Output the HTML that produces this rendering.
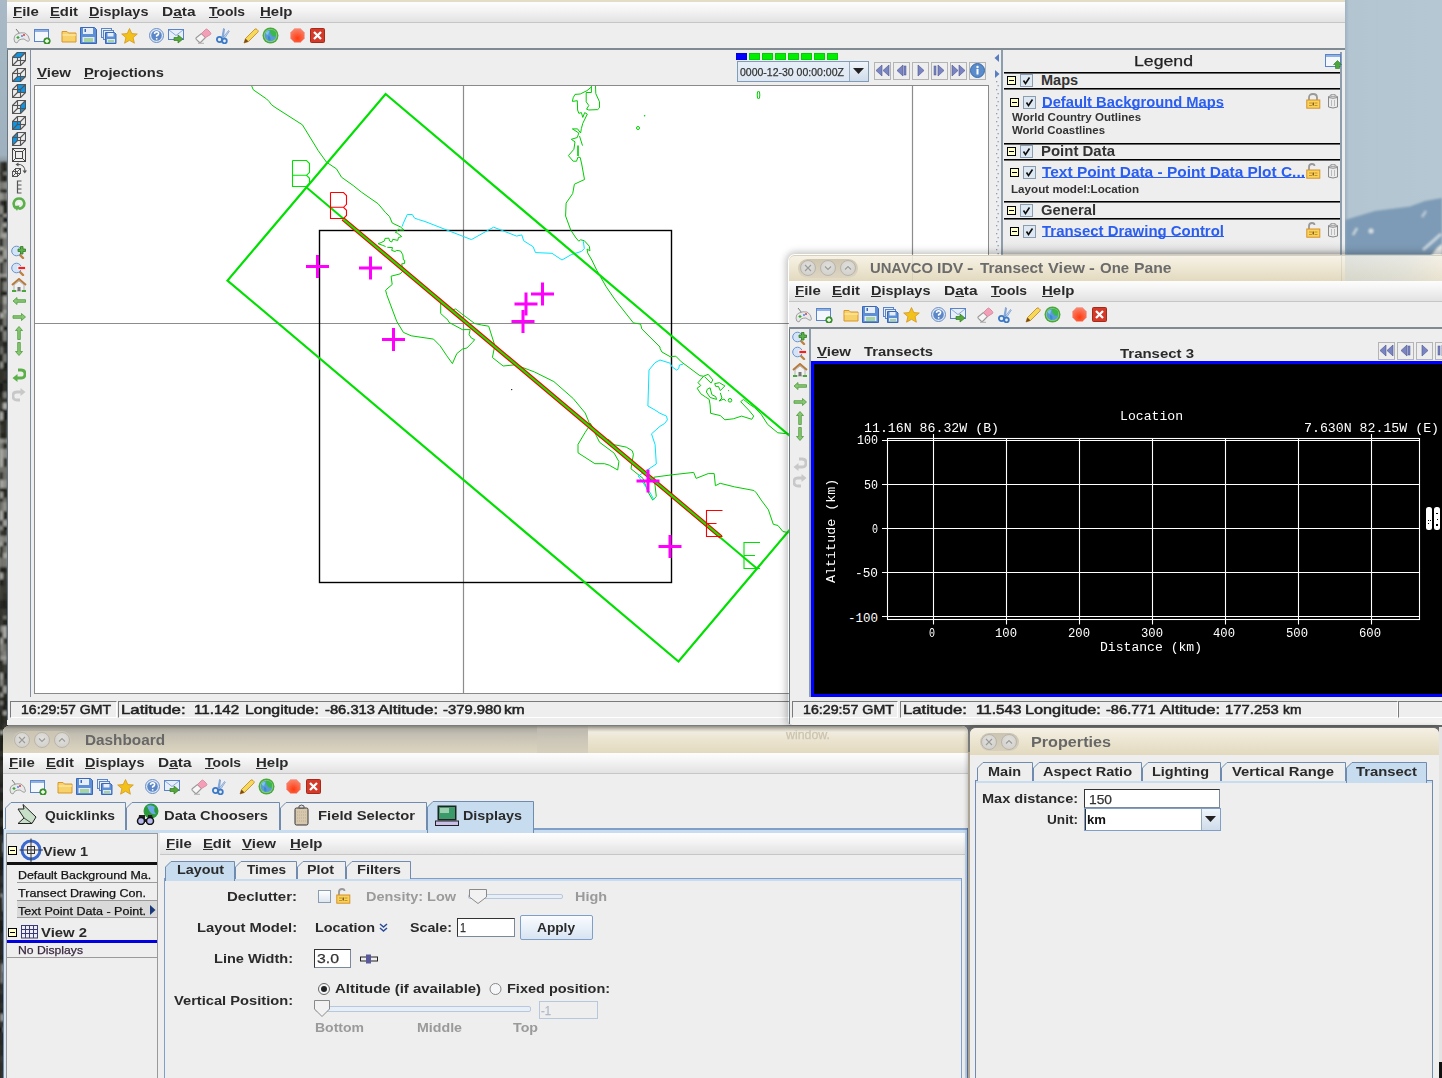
<!DOCTYPE html><html><head><meta charset="utf-8"><style>
html,body{margin:0;padding:0;width:1442px;height:1078px;overflow:hidden;background:#7a7b7b;}
div,svg{position:absolute;box-sizing:border-box;}
.t{white-space:pre;}
u{text-decoration:none;border-bottom:1px solid currentColor;}
</style></head><body>
<div style="left:0px;top:0px;width:8px;height:1078px;background:linear-gradient(#a9bac6 0,#9fb1be 155px,#6a6f70 170px,#9a9c9c 195px,#4a4d4e 225px,#a4a6a6 270px,#3a3c3d 320px,#2a2c2d 390px,#8a8c8c 440px,#4a4c4d 500px,#9a9c9c 550px,#2a2c2d 610px,#3a3c3d 700px,#1a1c1d 800px,#2a2c2d 1078px);"></div>
<svg style="left:0;top:0" width="7" height="1078"><defs><filter id="rk"><feGaussianBlur stdDeviation="1"/></filter></defs><g filter="url(#rk)"><rect x="0" y="162" width="4" height="6" fill="#363630"/><rect x="3" y="162" width="4" height="6" fill="#25251f"/><rect x="0" y="168" width="4" height="4" fill="#373731"/><rect x="3" y="168" width="4" height="4" fill="#24241e"/><rect x="0" y="172" width="4" height="3" fill="#22221c"/><rect x="3" y="172" width="4" height="3" fill="#73736d"/><rect x="0" y="175" width="4" height="7" fill="#35352f"/><rect x="3" y="175" width="4" height="7" fill="#23231d"/><rect x="0" y="182" width="4" height="7" fill="#767670"/><rect x="3" y="182" width="4" height="7" fill="#868680"/><rect x="0" y="189" width="4" height="4" fill="#363630"/><rect x="3" y="189" width="4" height="4" fill="#25251f"/><rect x="0" y="193" width="4" height="7" fill="#93938d"/><rect x="3" y="193" width="4" height="7" fill="#787872"/><rect x="0" y="200" width="4" height="6" fill="#33332d"/><rect x="3" y="200" width="4" height="6" fill="#1e1e18"/><rect x="0" y="206" width="4" height="8" fill="#8b8b85"/><rect x="3" y="206" width="4" height="8" fill="#1a1a14"/><rect x="0" y="214" width="4" height="3" fill="#1f1f19"/><rect x="3" y="214" width="4" height="3" fill="#93938d"/><rect x="0" y="217" width="4" height="6" fill="#70706a"/><rect x="3" y="217" width="4" height="6" fill="#191913"/><rect x="0" y="223" width="4" height="4" fill="#74746e"/><rect x="3" y="223" width="4" height="4" fill="#a0a09a"/><rect x="0" y="227" width="4" height="6" fill="#878781"/><rect x="3" y="227" width="4" height="6" fill="#2a2a24"/><rect x="0" y="233" width="4" height="5" fill="#989892"/><rect x="3" y="233" width="4" height="5" fill="#a2a29c"/><rect x="0" y="238" width="4" height="9" fill="#21211b"/><rect x="3" y="238" width="4" height="9" fill="#7a7a74"/><rect x="0" y="247" width="4" height="3" fill="#acaca6"/><rect x="3" y="247" width="4" height="3" fill="#868680"/><rect x="0" y="250" width="4" height="6" fill="#21211b"/><rect x="3" y="250" width="4" height="6" fill="#9f9f99"/><rect x="0" y="256" width="4" height="3" fill="#898983"/><rect x="3" y="256" width="4" height="3" fill="#94948e"/><rect x="0" y="259" width="4" height="3" fill="#a0a09a"/><rect x="3" y="259" width="4" height="3" fill="#1f1f19"/><rect x="0" y="262" width="4" height="3" fill="#262620"/><rect x="3" y="262" width="4" height="3" fill="#6f6f69"/><rect x="0" y="265" width="4" height="9" fill="#2b2b25"/><rect x="3" y="265" width="4" height="9" fill="#777771"/><rect x="0" y="274" width="4" height="3" fill="#8d8d87"/><rect x="3" y="274" width="4" height="3" fill="#9d9d97"/><rect x="0" y="277" width="4" height="5" fill="#21211b"/><rect x="3" y="277" width="4" height="5" fill="#373731"/><rect x="0" y="282" width="4" height="9" fill="#31312b"/><rect x="3" y="282" width="4" height="9" fill="#81817b"/><rect x="0" y="291" width="4" height="5" fill="#282822"/><rect x="3" y="291" width="4" height="5" fill="#23231d"/><rect x="0" y="296" width="4" height="8" fill="#3c3c36"/><rect x="3" y="296" width="4" height="8" fill="#9f9f99"/><rect x="0" y="304" width="4" height="6" fill="#33332d"/><rect x="3" y="304" width="4" height="6" fill="#7b7b75"/><rect x="0" y="310" width="4" height="3" fill="#292923"/><rect x="3" y="310" width="4" height="3" fill="#a0a09a"/><rect x="0" y="313" width="4" height="5" fill="#acaca6"/><rect x="3" y="313" width="4" height="5" fill="#84847e"/><rect x="0" y="318" width="4" height="8" fill="#21211b"/><rect x="3" y="318" width="4" height="8" fill="#777771"/><rect x="0" y="326" width="4" height="5" fill="#888882"/><rect x="3" y="326" width="4" height="5" fill="#1d1d17"/><rect x="0" y="331" width="4" height="5" fill="#282822"/><rect x="3" y="331" width="4" height="5" fill="#84847e"/><rect x="0" y="336" width="4" height="5" fill="#21211b"/><rect x="3" y="336" width="4" height="5" fill="#7f7f79"/><rect x="0" y="341" width="4" height="6" fill="#3a3a34"/><rect x="3" y="341" width="4" height="6" fill="#21211b"/><rect x="0" y="347" width="4" height="7" fill="#70706a"/><rect x="3" y="347" width="4" height="7" fill="#2f2f29"/><rect x="0" y="354" width="4" height="8" fill="#1b1b15"/><rect x="3" y="354" width="4" height="8" fill="#777771"/><rect x="0" y="362" width="4" height="6" fill="#95958f"/><rect x="3" y="362" width="4" height="6" fill="#1d1d17"/><rect x="0" y="368" width="4" height="3" fill="#30302a"/><rect x="3" y="368" width="4" height="3" fill="#21211b"/><rect x="0" y="371" width="4" height="9" fill="#2e2e28"/><rect x="3" y="371" width="4" height="9" fill="#373731"/><rect x="0" y="380" width="4" height="3" fill="#33332d"/><rect x="3" y="380" width="4" height="3" fill="#1a1a14"/><rect x="0" y="383" width="4" height="9" fill="#191913"/><rect x="3" y="383" width="4" height="9" fill="#31312b"/><rect x="0" y="392" width="4" height="6" fill="#1d1d17"/><rect x="3" y="392" width="4" height="6" fill="#7c7c76"/><rect x="0" y="398" width="4" height="5" fill="#2e2e28"/><rect x="3" y="398" width="4" height="5" fill="#363630"/><rect x="0" y="403" width="4" height="6" fill="#3b3b35"/><rect x="3" y="403" width="4" height="6" fill="#afafa9"/><rect x="0" y="409" width="4" height="3" fill="#1e1e18"/><rect x="3" y="409" width="4" height="3" fill="#272721"/><rect x="0" y="412" width="4" height="8" fill="#acaca6"/><rect x="3" y="412" width="4" height="8" fill="#191913"/><rect x="0" y="420" width="4" height="5" fill="#25251f"/><rect x="3" y="420" width="4" height="5" fill="#2e2e28"/><rect x="0" y="425" width="4" height="8" fill="#383832"/><rect x="3" y="425" width="4" height="8" fill="#2d2d27"/><rect x="0" y="433" width="4" height="6" fill="#25251f"/><rect x="3" y="433" width="4" height="6" fill="#25251f"/><rect x="0" y="439" width="4" height="4" fill="#969690"/><rect x="3" y="439" width="4" height="4" fill="#7f7f79"/><rect x="0" y="443" width="4" height="6" fill="#73736d"/><rect x="3" y="443" width="4" height="6" fill="#2a2a24"/><rect x="0" y="449" width="4" height="9" fill="#a7a7a1"/><rect x="3" y="449" width="4" height="9" fill="#898983"/><rect x="0" y="458" width="4" height="9" fill="#adada7"/><rect x="3" y="458" width="4" height="9" fill="#35352f"/><rect x="0" y="467" width="4" height="5" fill="#72726c"/><rect x="3" y="467" width="4" height="5" fill="#73736d"/><rect x="0" y="472" width="4" height="8" fill="#2f2f29"/><rect x="3" y="472" width="4" height="8" fill="#70706a"/><rect x="0" y="480" width="4" height="8" fill="#a8a8a2"/><rect x="3" y="480" width="4" height="8" fill="#90908a"/><rect x="0" y="488" width="4" height="4" fill="#1c1c16"/><rect x="3" y="488" width="4" height="4" fill="#20201a"/><rect x="0" y="492" width="4" height="6" fill="#9d9d97"/><rect x="3" y="492" width="4" height="6" fill="#25251f"/><rect x="0" y="498" width="4" height="4" fill="#292923"/><rect x="3" y="498" width="4" height="4" fill="#6f6f69"/><rect x="0" y="502" width="4" height="9" fill="#72726c"/><rect x="3" y="502" width="4" height="9" fill="#90908a"/><rect x="0" y="511" width="4" height="9" fill="#aeaea8"/><rect x="3" y="511" width="4" height="9" fill="#23231d"/><rect x="0" y="520" width="4" height="6" fill="#272721"/><rect x="3" y="520" width="4" height="6" fill="#9f9f99"/><rect x="0" y="526" width="4" height="4" fill="#878781"/><rect x="3" y="526" width="4" height="4" fill="#191913"/><rect x="0" y="530" width="4" height="6" fill="#393933"/><rect x="3" y="530" width="4" height="6" fill="#2e2e28"/><rect x="0" y="536" width="4" height="6" fill="#888882"/><rect x="3" y="536" width="4" height="6" fill="#7d7d77"/><rect x="0" y="542" width="4" height="4" fill="#9f9f99"/><rect x="3" y="542" width="4" height="4" fill="#2c2c26"/><rect x="0" y="546" width="4" height="7" fill="#2d2d27"/><rect x="3" y="546" width="4" height="7" fill="#70706a"/><rect x="0" y="553" width="4" height="5" fill="#1b1b15"/><rect x="3" y="553" width="4" height="5" fill="#a3a39d"/><rect x="0" y="558" width="4" height="9" fill="#71716b"/><rect x="3" y="558" width="4" height="9" fill="#767670"/><rect x="0" y="567" width="4" height="6" fill="#24241e"/><rect x="3" y="567" width="4" height="6" fill="#21211b"/><rect x="0" y="573" width="4" height="6" fill="#a6a6a0"/><rect x="3" y="573" width="4" height="6" fill="#383832"/><rect x="0" y="579" width="4" height="7" fill="#1e1e18"/><rect x="3" y="579" width="4" height="7" fill="#35352f"/><rect x="0" y="586" width="4" height="7" fill="#3c3c36"/><rect x="3" y="586" width="4" height="7" fill="#3a3a34"/><rect x="0" y="593" width="4" height="7" fill="#3c3c36"/><rect x="3" y="593" width="4" height="7" fill="#31312b"/><rect x="0" y="600" width="4" height="9" fill="#262620"/><rect x="3" y="600" width="4" height="9" fill="#22221c"/><rect x="0" y="609" width="4" height="7" fill="#383832"/><rect x="3" y="609" width="4" height="7" fill="#3b3b35"/><rect x="0" y="616" width="4" height="3" fill="#31312b"/><rect x="3" y="616" width="4" height="3" fill="#73736d"/><rect x="0" y="619" width="4" height="7" fill="#3b3b35"/><rect x="3" y="619" width="4" height="7" fill="#20201a"/><rect x="0" y="626" width="4" height="6" fill="#83837d"/><rect x="3" y="626" width="4" height="6" fill="#a8a8a2"/><rect x="0" y="632" width="4" height="6" fill="#32322c"/><rect x="3" y="632" width="4" height="6" fill="#aaaaa4"/><rect x="0" y="638" width="4" height="6" fill="#a5a59f"/><rect x="3" y="638" width="4" height="6" fill="#373731"/><rect x="0" y="644" width="4" height="7" fill="#868680"/><rect x="3" y="644" width="4" height="7" fill="#71716b"/><rect x="0" y="651" width="4" height="5" fill="#70706a"/><rect x="3" y="651" width="4" height="5" fill="#81817b"/><rect x="0" y="656" width="4" height="4" fill="#92928c"/><rect x="3" y="656" width="4" height="4" fill="#9b9b95"/><rect x="0" y="660" width="4" height="4" fill="#1f1f19"/><rect x="3" y="660" width="4" height="4" fill="#7d7d77"/><rect x="0" y="664" width="4" height="9" fill="#292923"/><rect x="3" y="664" width="4" height="9" fill="#3a3a34"/><rect x="0" y="673" width="4" height="6" fill="#a2a29c"/><rect x="3" y="673" width="4" height="6" fill="#23231d"/><rect x="0" y="679" width="4" height="7" fill="#898983"/><rect x="3" y="679" width="4" height="7" fill="#3b3b35"/><rect x="0" y="686" width="4" height="7" fill="#21211b"/><rect x="3" y="686" width="4" height="7" fill="#9a9a94"/><rect x="0" y="693" width="4" height="4" fill="#969690"/><rect x="3" y="693" width="4" height="4" fill="#25251f"/><rect x="0" y="697" width="4" height="4" fill="#25251f"/><rect x="3" y="697" width="4" height="4" fill="#21211b"/><rect x="0" y="701" width="4" height="4" fill="#797973"/><rect x="3" y="701" width="4" height="4" fill="#1f1f19"/><rect x="0" y="705" width="4" height="6" fill="#33332d"/><rect x="3" y="705" width="4" height="6" fill="#21211b"/><rect x="0" y="711" width="4" height="4" fill="#1a1a14"/><rect x="3" y="711" width="4" height="4" fill="#9b9b95"/><rect x="0" y="715" width="4" height="9" fill="#20201a"/><rect x="3" y="715" width="4" height="9" fill="#2e2e28"/><rect x="0" y="724" width="4" height="7" fill="#25251f"/><rect x="3" y="724" width="4" height="7" fill="#373731"/><rect x="0" y="731" width="4" height="3" fill="#afafa9"/><rect x="3" y="731" width="4" height="3" fill="#373731"/><rect x="0" y="734" width="4" height="4" fill="#20201a"/><rect x="3" y="734" width="4" height="4" fill="#23231d"/><rect x="0" y="738" width="4" height="5" fill="#1f1f19"/><rect x="3" y="738" width="4" height="5" fill="#21211b"/><rect x="0" y="743" width="4" height="8" fill="#1f1f19"/><rect x="3" y="743" width="4" height="8" fill="#363630"/><rect x="0" y="751" width="4" height="6" fill="#34342e"/><rect x="3" y="751" width="4" height="6" fill="#30302a"/><rect x="0" y="757" width="4" height="3" fill="#1b1b15"/><rect x="3" y="757" width="4" height="3" fill="#24241e"/><rect x="0" y="760" width="4" height="6" fill="#30302a"/><rect x="3" y="760" width="4" height="6" fill="#25251f"/><rect x="0" y="766" width="4" height="7" fill="#393933"/><rect x="3" y="766" width="4" height="7" fill="#2d2d27"/><rect x="0" y="773" width="4" height="3" fill="#32322c"/><rect x="3" y="773" width="4" height="3" fill="#25251f"/><rect x="0" y="776" width="4" height="7" fill="#2e2e28"/><rect x="3" y="776" width="4" height="7" fill="#292923"/><rect x="0" y="783" width="4" height="5" fill="#23231d"/><rect x="3" y="783" width="4" height="5" fill="#32322c"/><rect x="0" y="788" width="4" height="4" fill="#3b3b35"/><rect x="3" y="788" width="4" height="4" fill="#34342e"/><rect x="0" y="792" width="4" height="9" fill="#262620"/><rect x="3" y="792" width="4" height="9" fill="#1d1d17"/><rect x="0" y="801" width="4" height="9" fill="#373731"/><rect x="3" y="801" width="4" height="9" fill="#2f2f29"/><rect x="0" y="810" width="4" height="8" fill="#1c1c16"/><rect x="3" y="810" width="4" height="8" fill="#2c2c26"/><rect x="0" y="818" width="4" height="5" fill="#32322c"/><rect x="3" y="818" width="4" height="5" fill="#3b3b35"/><rect x="0" y="823" width="4" height="3" fill="#383832"/><rect x="3" y="823" width="4" height="3" fill="#20201a"/><rect x="0" y="826" width="4" height="9" fill="#1a1a14"/><rect x="3" y="826" width="4" height="9" fill="#1f1f19"/><rect x="0" y="835" width="4" height="8" fill="#35352f"/><rect x="3" y="835" width="4" height="8" fill="#1c1c16"/><rect x="0" y="843" width="4" height="9" fill="#31312b"/><rect x="3" y="843" width="4" height="9" fill="#8f8f89"/><rect x="0" y="852" width="4" height="5" fill="#2e2e28"/><rect x="3" y="852" width="4" height="5" fill="#393933"/><rect x="0" y="857" width="4" height="6" fill="#1f1f19"/><rect x="3" y="857" width="4" height="6" fill="#1d1d17"/><rect x="0" y="863" width="4" height="7" fill="#1b1b15"/><rect x="3" y="863" width="4" height="7" fill="#23231d"/><rect x="0" y="870" width="4" height="6" fill="#23231d"/><rect x="3" y="870" width="4" height="6" fill="#3b3b35"/><rect x="0" y="876" width="4" height="7" fill="#34342e"/><rect x="3" y="876" width="4" height="7" fill="#33332d"/><rect x="0" y="883" width="4" height="5" fill="#2c2c26"/><rect x="3" y="883" width="4" height="5" fill="#2b2b25"/><rect x="0" y="888" width="4" height="6" fill="#3c3c36"/><rect x="3" y="888" width="4" height="6" fill="#2b2b25"/><rect x="0" y="894" width="4" height="3" fill="#8d8d87"/><rect x="3" y="894" width="4" height="3" fill="#23231d"/><rect x="0" y="897" width="4" height="6" fill="#31312b"/><rect x="3" y="897" width="4" height="6" fill="#969690"/><rect x="0" y="903" width="4" height="8" fill="#2d2d27"/><rect x="3" y="903" width="4" height="8" fill="#8a8a84"/><rect x="0" y="911" width="4" height="6" fill="#292923"/><rect x="3" y="911" width="4" height="6" fill="#282822"/><rect x="0" y="917" width="4" height="3" fill="#363630"/><rect x="3" y="917" width="4" height="3" fill="#282822"/><rect x="0" y="920" width="4" height="7" fill="#1c1c16"/><rect x="3" y="920" width="4" height="7" fill="#363630"/><rect x="0" y="927" width="4" height="3" fill="#1c1c16"/><rect x="3" y="927" width="4" height="3" fill="#22221c"/><rect x="0" y="930" width="4" height="3" fill="#21211b"/><rect x="3" y="930" width="4" height="3" fill="#363630"/><rect x="0" y="933" width="4" height="7" fill="#33332d"/><rect x="3" y="933" width="4" height="7" fill="#3a3a34"/><rect x="0" y="940" width="4" height="9" fill="#2b2b25"/><rect x="3" y="940" width="4" height="9" fill="#282822"/><rect x="0" y="949" width="4" height="6" fill="#2c2c26"/><rect x="3" y="949" width="4" height="6" fill="#2f2f29"/><rect x="0" y="955" width="4" height="5" fill="#25251f"/><rect x="3" y="955" width="4" height="5" fill="#282822"/><rect x="0" y="960" width="4" height="4" fill="#393933"/><rect x="3" y="960" width="4" height="4" fill="#25251f"/><rect x="0" y="964" width="4" height="8" fill="#75756f"/><rect x="3" y="964" width="4" height="8" fill="#8f8f89"/><rect x="0" y="972" width="4" height="6" fill="#72726c"/><rect x="3" y="972" width="4" height="6" fill="#3b3b35"/><rect x="0" y="978" width="4" height="5" fill="#797973"/><rect x="3" y="978" width="4" height="5" fill="#23231d"/><rect x="0" y="983" width="4" height="7" fill="#30302a"/><rect x="3" y="983" width="4" height="7" fill="#2f2f29"/><rect x="0" y="990" width="4" height="4" fill="#383832"/><rect x="3" y="990" width="4" height="4" fill="#1d1d17"/><rect x="0" y="994" width="4" height="9" fill="#262620"/><rect x="3" y="994" width="4" height="9" fill="#292923"/><rect x="0" y="1003" width="4" height="6" fill="#30302a"/><rect x="3" y="1003" width="4" height="6" fill="#2d2d27"/><rect x="0" y="1009" width="4" height="5" fill="#24241e"/><rect x="3" y="1009" width="4" height="5" fill="#30302a"/><rect x="0" y="1014" width="4" height="7" fill="#979791"/><rect x="3" y="1014" width="4" height="7" fill="#787872"/><rect x="0" y="1021" width="4" height="6" fill="#383832"/><rect x="3" y="1021" width="4" height="6" fill="#363630"/><rect x="0" y="1027" width="4" height="5" fill="#191913"/><rect x="3" y="1027" width="4" height="5" fill="#898983"/><rect x="0" y="1032" width="4" height="8" fill="#2c2c26"/><rect x="3" y="1032" width="4" height="8" fill="#2d2d27"/><rect x="0" y="1040" width="4" height="5" fill="#272721"/><rect x="3" y="1040" width="4" height="5" fill="#2d2d27"/><rect x="0" y="1045" width="4" height="5" fill="#2d2d27"/><rect x="3" y="1045" width="4" height="5" fill="#2a2a24"/><rect x="0" y="1050" width="4" height="6" fill="#2c2c26"/><rect x="3" y="1050" width="4" height="6" fill="#272721"/><rect x="0" y="1056" width="4" height="6" fill="#3a3a34"/><rect x="3" y="1056" width="4" height="6" fill="#30302a"/><rect x="0" y="1062" width="4" height="9" fill="#30302a"/><rect x="3" y="1062" width="4" height="9" fill="#31312b"/><rect x="0" y="1071" width="4" height="9" fill="#30302a"/><rect x="3" y="1071" width="4" height="9" fill="#3b3b35"/></g></svg>
<div style="left:1345px;top:0px;width:97px;height:256px;background:linear-gradient(90deg,#9fb2bf 0,#b3c5d1 4px,#b5c7d2);"></div>
<svg style="left:1345px;top:190px" width="97" height="66"><defs><filter id="bl"><feGaussianBlur stdDeviation="0.8"/></filter></defs><g filter="url(#bl)"><path d="M0 30 L15 25.5 L30 21 L65 16.5 L80 11 L97 8 V66 H0Z" fill="#7d9bb6"/><path d="M8 45 L12 38" stroke="#c8d4dc" stroke-width="2.5"/><circle cx="26" cy="41" r="2.5" fill="#d4dde4"/><path d="M77 27 L81 21" stroke="#b8c8d4" stroke-width="2.5"/><path d="M78 60 L96 44" stroke="#c8d6e0" stroke-width="3"/><path d="M86 66 L92 58 L97 54 V66Z" fill="#e8ecea"/></g></svg>
<div style="left:7px;top:0px;width:1338px;height:3px;background:#e3dcc6;"></div>
<div style="left:7px;top:2px;width:1338px;height:20px;background:linear-gradient(#fdfdfd,#f4f4f4 40%,#e2e2e2);"></div>
<div style="left:7px;top:22px;width:1338px;height:1px;background:#c6c6c6;"></div>
<div style="left:13.0px;top:17px;width:9.1px;height:1px;background:#2a2a2a"></div>
<div class="t" style="left:13px;top:6px;font-size:12.6px;line-height:12.6px;font-weight:bold;color:#2a2a2a;font-family:'Liberation Sans',sans-serif;transform:scaleX(1.1888);transform-origin:0 0;">File</div>
<div style="left:50.0px;top:17px;width:9.9px;height:1px;background:#2a2a2a"></div>
<div class="t" style="left:50px;top:6px;font-size:12.6px;line-height:12.6px;font-weight:bold;color:#2a2a2a;font-family:'Liberation Sans',sans-serif;transform:scaleX(1.1754);transform-origin:0 0;">Edit</div>
<div style="left:89.0px;top:17px;width:10.4px;height:1px;background:#2a2a2a"></div>
<div class="t" style="left:89px;top:6px;font-size:12.6px;line-height:12.6px;font-weight:bold;color:#2a2a2a;font-family:'Liberation Sans',sans-serif;transform:scaleX(1.1473);transform-origin:0 0;">Displays</div>
<div style="left:173.2px;top:17px;width:8.6px;height:1px;background:#2a2a2a"></div>
<div class="t" style="left:162px;top:6px;font-size:12.6px;line-height:12.6px;font-weight:bold;color:#2a2a2a;font-family:'Liberation Sans',sans-serif;transform:scaleX(1.2268);transform-origin:0 0;">Data</div>
<div style="left:209.0px;top:17px;width:8.5px;height:1px;background:#2a2a2a"></div>
<div class="t" style="left:209px;top:6px;font-size:12.6px;line-height:12.6px;font-weight:bold;color:#2a2a2a;font-family:'Liberation Sans',sans-serif;transform:scaleX(1.1049);transform-origin:0 0;">Tools</div>
<div style="left:260.0px;top:17px;width:10.8px;height:1px;background:#2a2a2a"></div>
<div class="t" style="left:260px;top:6px;font-size:12.6px;line-height:12.6px;font-weight:bold;color:#2a2a2a;font-family:'Liberation Sans',sans-serif;transform:scaleX(1.1884);transform-origin:0 0;">Help</div>
<div style="left:7px;top:23px;width:1338px;height:26px;background:#eeeeee;"></div>
<div style="left:7px;top:48px;width:1338px;height:2px;background:#7f8a93;"></div>
<svg style="left:13px;top:28px" width="17" height="16" viewBox="0 0 17 16"><path d="M3 1 L7 6" stroke="#777" stroke-width="1" fill="none"/><path d="M4 6 Q8 4 12 5 Q16 7 16.5 12 Q16 14 14 13 L11 11 Q8 11 6 12 L4 15 Q1 15 1 11 Q1 7 4 6Z" fill="#e8e8e8" stroke="#999" stroke-width="0.9"/><path d="M3.5 9.5 h3 M5 8 v3" stroke="#3a3" stroke-width="1.2"/><circle cx="9" cy="8" r="1" fill="#48f"/><circle cx="11" cy="7" r="1" fill="#e33"/></svg>
<svg style="left:34px;top:28px" width="17" height="16" viewBox="0 0 17 16"><rect x="0.5" y="1.5" width="14" height="12" fill="#f4f7fc" stroke="#5a84c8"/><rect x="1" y="2" width="13" height="2" fill="#8fb0e0"/><circle cx="13" cy="13" r="3.3" fill="#3c9a2c" stroke="#2a7a20" stroke-width="0.6"/><path d="M11 13h4M13 11v4" stroke="#fff" stroke-width="1.3"/></svg>
<svg style="left:61px;top:28px" width="16" height="16" viewBox="0 0 16 16"><path d="M1 3.5h5l1.5 1.5h7.5v9h-14z" fill="#f7d26a" stroke="#d9962a" stroke-width="1"/><path d="M1.5 7h13.5" stroke="#fbe9a8" stroke-width="1.2"/></svg>
<svg style="left:80px;top:27px" width="17" height="17" viewBox="0 0 17 17"><path d="M0.5 0.5h14l2 2v14h-16z" fill="#5d8fd6" stroke="#3a68b8"/><rect x="3" y="1" width="10" height="6" fill="#e8eef8"/><rect x="4.5" y="2" width="1.5" height="3" fill="#3a68b8"/><rect x="2.5" y="10" width="12" height="5" fill="#dfe8f4"/><path d="M4 12h9M4 14h9" stroke="#6cbf4a" stroke-width="1"/></svg>
<svg style="left:101px;top:28px" width="16" height="16" viewBox="0 0 16 16"><rect x="0.5" y="0.5" width="10" height="9" fill="#e8eef8" stroke="#5a84c8"/><rect x="2.5" y="2.5" width="10" height="9" fill="#e8eef8" stroke="#5a84c8"/><path d="M4.5 4.5h9l1.5 1.5v9.5h-10.5z" fill="#5d8fd6" stroke="#3a68b8"/><rect x="6.5" y="5" width="6" height="3.5" fill="#e8eef8"/><rect x="6" y="11" width="8" height="3.5" fill="#dfe8f4"/><path d="M7 13h6" stroke="#6cbf4a"/></svg>
<svg style="left:121px;top:28px" width="17" height="16" viewBox="0 0 17 16"><path d="M8.5 0.5 L10.8 5.6 L16.3 6 L12.1 9.6 L13.4 15.2 L8.5 12.3 L3.6 15.2 L4.9 9.6 L0.7 6 L6.2 5.6Z" fill="#f2c21b" stroke="#d6951a" stroke-width="0.8"/></svg>
<svg style="left:149px;top:28px" width="16" height="16" viewBox="0 0 16 16"><circle cx="7.5" cy="7.5" r="7" fill="#dfe8f5" stroke="#6a8fc8"/><circle cx="7.5" cy="7.5" r="5.3" fill="#5d88c8"/><path d="M5.5 5.8 Q5.7 3.8 7.6 3.8 Q9.6 3.9 9.6 5.6 Q9.5 7 7.7 7.6 V8.8" stroke="#fff" stroke-width="1.6" fill="none"/><circle cx="7.7" cy="10.8" r="0.9" fill="#fff"/></svg>
<svg style="left:168px;top:28px" width="17" height="16" viewBox="0 0 17 16"><rect x="0.5" y="1.5" width="15" height="10" fill="#e8eefa" stroke="#5a84c8"/><path d="M1 2 L8 7.5 L15 2" stroke="#8aa8dc" fill="none"/><path d="M6 9.5h4v-2.5l5 4l-5 4v-2.5h-4z" fill="#56a63a" stroke="#2f7d22" stroke-width="0.7"/></svg>
<svg style="left:195px;top:28px" width="17" height="16" viewBox="0 0 17 16"><path d="M6.5 5.5 L10.5 9.5 L6 14 Q5 15 4 14 L1.3 11.3 Q0.5 10.3 1.5 9.5Z" fill="#f6f6f6" stroke="#9a9a9a" stroke-width="1.1"/><path d="M6.5 5.5 L10.5 1.5 Q11.5 0.5 12.5 1.5 L15.5 4.5 Q16.3 5.5 15.5 6.5 L10.5 9.5Z" fill="#f2a0b8" stroke="#d8849c" stroke-width="0.9"/><path d="M3 15.3h6" stroke="#b0b0b0" stroke-width="1"/></svg>
<svg style="left:216px;top:28px" width="14" height="16" viewBox="0 0 14 16"><path d="M6 9 L7.5 0.5 L8.5 1 L7.5 9.5Z" fill="#9ab8e0" stroke="#5a88c8" stroke-width="0.6"/><path d="M7.5 9 L12.5 2.5 L13.3 3.2 L9 9.8Z" fill="#c8dcf0" stroke="#5a88c8" stroke-width="0.6"/><circle cx="3.5" cy="11.5" r="2.6" fill="none" stroke="#3a7ac8" stroke-width="1.8"/><circle cx="8.5" cy="13" r="2.3" fill="none" stroke="#3a7ac8" stroke-width="1.8"/></svg>
<svg style="left:243px;top:28px" width="16" height="16" viewBox="0 0 16 16"><path d="M1 15 L2.5 10.5 L12 1 Q13 0.5 14 1.5 L15 2.5 Q15.5 3.5 14.8 4.2 L5.5 13.5Z" fill="#f4d95a" stroke="#c88a2a" stroke-width="0.9"/><path d="M1 15 L2.5 10.5 L5.5 13.5Z" fill="#7a4a1a"/></svg>
<svg style="left:262px;top:27px" width="17" height="17" viewBox="0 0 17 17"><circle cx="8.5" cy="8.5" r="8" fill="#4aa83a"/><circle cx="8.5" cy="8.5" r="6.6" fill="#8ad07a"/><circle cx="8.5" cy="8.5" r="5.8" fill="#5a9ad8"/><path d="M8 2.8 Q12 2.5 14 5.5 Q14.5 9 12.5 10 Q10 9.5 9.5 8 Q8 7 8 2.8Z" fill="#3ab84a"/><path d="M6 9 Q8 9 8.5 11 Q9 13.5 7 14 Q5.5 12 6 9Z" fill="#3a8ad0"/><path d="M4 5 Q6 3.5 7.5 4.5 Q6 6 6.5 7.5 Q5 8 4 7Z" fill="#7ac8e8"/></svg>
<svg style="left:290px;top:28px" width="15" height="15" viewBox="0 0 15 15"><defs><radialGradient id="rcg" cx="0.5" cy="0.7" r="0.7"><stop offset="0" stop-color="#ff3a10"/><stop offset="1" stop-color="#f88870"/></radialGradient></defs><path d="M4.5 0.5h6l4 4v6l-4 4h-6l-4-4v-6z" fill="url(#rcg)" stroke="#f0a8a0" stroke-width="0.9"/></svg>
<svg style="left:310px;top:28px" width="15" height="15" viewBox="0 0 15 15"><rect x="0.5" y="0.5" width="14" height="14" rx="1" fill="#d43a2a" stroke="#a42a1a"/><path d="M4 4 L11 11 M11 4 L4 11" stroke="#fff" stroke-width="2.3"/></svg>
<div style="left:7px;top:50px;width:1338px;height:675px;background:#eeeeee;"></div>
<div style="left:7px;top:50px;width:1px;height:670px;background:#6a7680;"></div>
<div style="left:30px;top:50px;width:1px;height:647px;background:#7f8fa0;"></div>
<svg style="left:12px;top:52px" width="14" height="14" viewBox="0 0 14 14"><path d="M0.5 5.5 L5.5 0.5 H13.5 L8.5 5.5Z" fill="#0a96e8"/><g stroke="#555" stroke-width="1.1" fill="none"><rect x="0.5" y="5.5" width="8" height="8"/><rect x="5.5" y="0.5" width="8" height="8"/><path d="M0.5 5.5L5.5 0.5M8.5 5.5L13.5 0.5M0.5 13.5L5.5 8.5M8.5 13.5L13.5 8.5"/></g><path d="M0.5 5.5 L5.5 0.5 H13.5 L8.5 5.5Z" fill="#0a96e8" stroke="#555" stroke-width="1.1"/></svg>
<svg style="left:12px;top:68px" width="14" height="14" viewBox="0 0 14 14"><path d="M0.5 13.5 L5.5 8.5 H13.5 L8.5 13.5Z" fill="#0a96e8"/><g stroke="#555" stroke-width="1.1" fill="none"><rect x="0.5" y="5.5" width="8" height="8"/><rect x="5.5" y="0.5" width="8" height="8"/><path d="M0.5 5.5L5.5 0.5M8.5 5.5L13.5 0.5M0.5 13.5L5.5 8.5M8.5 13.5L13.5 8.5"/></g></svg>
<svg style="left:12px;top:84px" width="14" height="14" viewBox="0 0 14 14"><rect x="5.5" y="0.5" width="8" height="8" fill="#0a96e8"/><g stroke="#555" stroke-width="1.1" fill="none"><rect x="0.5" y="5.5" width="8" height="8"/><rect x="5.5" y="0.5" width="8" height="8"/><path d="M0.5 5.5L5.5 0.5M8.5 5.5L13.5 0.5M0.5 13.5L5.5 8.5M8.5 13.5L13.5 8.5"/></g></svg>
<svg style="left:12px;top:100px" width="14" height="14" viewBox="0 0 14 14"><path d="M8.5 5.5 L13.5 0.5 V8.5 L8.5 13.5Z" fill="#0a96e8"/><g stroke="#555" stroke-width="1.1" fill="none"><rect x="0.5" y="5.5" width="8" height="8"/><rect x="5.5" y="0.5" width="8" height="8"/><path d="M0.5 5.5L5.5 0.5M8.5 5.5L13.5 0.5M0.5 13.5L5.5 8.5M8.5 13.5L13.5 8.5"/></g></svg>
<svg style="left:12px;top:116px" width="14" height="14" viewBox="0 0 14 14"><rect x="0.5" y="5.5" width="8" height="8" fill="#0a96e8"/><g stroke="#555" stroke-width="1.1" fill="none"><rect x="0.5" y="5.5" width="8" height="8"/><rect x="5.5" y="0.5" width="8" height="8"/><path d="M0.5 5.5L5.5 0.5M8.5 5.5L13.5 0.5M0.5 13.5L5.5 8.5M8.5 13.5L13.5 8.5"/></g></svg>
<svg style="left:12px;top:132px" width="14" height="14" viewBox="0 0 14 14"><path d="M0.5 5.5 L5.5 0.5 V8.5 L0.5 13.5Z" fill="#0a96e8"/><g stroke="#555" stroke-width="1.1" fill="none"><rect x="0.5" y="5.5" width="8" height="8"/><rect x="5.5" y="0.5" width="8" height="8"/><path d="M0.5 5.5L5.5 0.5M8.5 5.5L13.5 0.5M0.5 13.5L5.5 8.5M8.5 13.5L13.5 8.5"/></g></svg>
<svg style="left:12px;top:148px" width="14" height="14" viewBox="0 0 14 14"><g stroke="#444" fill="none"><rect x="0.5" y="0.5" width="13" height="13"/><rect x="3.5" y="3.5" width="7" height="7"/><path d="M0.5 0.5L3.5 3.5M13.5 0.5L10.5 3.5M0.5 13.5L3.5 10.5M13.5 13.5L10.5 10.5"/></g></svg>
<svg style="left:11px;top:162px" width="16" height="16" viewBox="0 0 16 16"><g stroke="#555" fill="none" stroke-width="1"><rect x="1.5" y="9.5" width="5" height="5"/><rect x="4.5" y="6.5" width="5" height="5"/><path d="M1.5 9.5L4.5 6.5M6.5 9.5L9.5 6.5M1.5 14.5L4.5 11.5M6.5 14.5L9.5 11.5"/><path d="M6 2.5 Q10 2 12 4 Q14 6 14 9"/></g><path d="M4.5 2.5 L7.5 0.5 V4.5Z M11.5 8.5 H16 L13.8 11.5Z" fill="#555"/></svg>
<svg style="left:15px;top:180px" width="8" height="14" viewBox="0 0 8 14"><g stroke="#555" fill="none" stroke-width="1.2"><path d="M2.5 0.5V13.5M2 1h4.5M2 5h4.5M2 9h4.5M2 13h4.5"/></g></svg>
<svg style="left:12px;top:197px" width="14" height="15" viewBox="0 0 14 15"><path d="M4 11.5 Q1 9 1.8 5.5 Q3 1.5 7 1.5 Q11.5 1.5 12.3 6 Q12.5 10 8.5 11.5 Q6.5 12 5.5 9.5" fill="none" stroke="#5cb04a" stroke-width="2.6"/><path d="M2 9 L7.5 8.5 L5 14Z" fill="#5cb04a"/><circle cx="7" cy="6.5" r="1.2" fill="#fff" opacity="0.7"/></svg>
<svg style="left:11px;top:245px" width="15" height="14" viewBox="0 0 15 14"><path d="M7.5 8.5 L12 13" stroke="#c08040" stroke-width="2.4" stroke-linecap="round"/><circle cx="5.5" cy="6" r="4.8" fill="#d4e4f6" stroke="#6a94cc" stroke-width="1"/><path d="M9.5 1.5h2.5v2.5h2.5v2.5h-2.5v2.5h-2.5v-2.5h-2.5v-2.5h2.5z" fill="#5cb04a" stroke="#2f7a22" stroke-width="0.8"/></svg>
<svg style="left:11px;top:262px" width="15" height="14" viewBox="0 0 15 14"><path d="M7.5 8.5 L12 13" stroke="#c08040" stroke-width="2.4" stroke-linecap="round"/><circle cx="5.5" cy="6" r="4.8" fill="#d4e4f6" stroke="#6a94cc" stroke-width="1"/><rect x="7" y="4.5" width="7.5" height="3" fill="#ee2222" stroke="#fff" stroke-width="0.7"/></svg>
<svg style="left:11px;top:278px" width="16" height="14" viewBox="0 0 16 14"><path d="M1 7 L8 1 L15 7" fill="none" stroke="#b87a3a" stroke-width="2"/><path d="M3 7 L8 3 L13 7 V13 H3Z" fill="#f2f2f2" stroke="#999" stroke-width="0.7"/><rect x="6.5" y="9" width="3" height="4" fill="#777"/><path d="M1 13h4M11 13h4" stroke="#4aa83a" stroke-width="2"/></svg>
<svg style="left:12px;top:297px" width="15" height="8" viewBox="0 0 15 8"><path d="M1 4 L5 0.5 V2.7 H13.5 V5.3 H5 V7.5Z" fill="#86c872" stroke="#4f9a3c" stroke-width="0.8"/></svg>
<svg style="left:12px;top:313px" width="15" height="8" viewBox="0 0 15 8"><path d="M13.5 4 L9.5 0.5 V2.7 H1 V5.3 H9.5 V7.5Z" fill="#86c872" stroke="#4f9a3c" stroke-width="0.8"/></svg>
<svg style="left:15px;top:326px" width="8" height="14" viewBox="0 0 8 14"><path d="M4 0.5 L7.5 4.5 H5.3 V13.5 H2.7 V4.5 H0.5Z" fill="#86c872" stroke="#4f9a3c" stroke-width="0.8"/></svg>
<svg style="left:15px;top:342px" width="8" height="14" viewBox="0 0 8 14"><path d="M4 13.5 L7.5 9.5 H5.3 V0.5 H2.7 V9.5 H0.5Z" fill="#86c872" stroke="#4f9a3c" stroke-width="0.8"/></svg>
<svg style="left:12px;top:368px" width="14" height="15" viewBox="0 0 14 15"><path d="M6 2 H9 Q13 2 13 6 Q13 10 9 10 H4" fill="none" stroke="#5cb04a" stroke-width="2.8"/><path d="M5.5 6 L0.5 10 L5.5 14Z" fill="#5cb04a"/></svg>
<svg style="left:12px;top:387px" width="14" height="15" viewBox="0 0 14 15"><path d="M8 13 H5 Q1 13 1 9 Q1 5 5 5 H10" fill="none" stroke="#c8c8c8" stroke-width="2.8"/><path d="M8.5 1 L13.5 5 L8.5 9Z" fill="#c8c8c8"/></svg>
<div style="left:37.0px;top:78px;width:10.0px;height:1px;background:#2a2a2a"></div>
<div class="t" style="left:37px;top:67px;font-size:12.6px;line-height:12.6px;font-weight:bold;color:#2a2a2a;font-family:'Liberation Sans',sans-serif;transform:scaleX(1.1954);transform-origin:0 0;">View</div>
<div style="left:84.0px;top:78px;width:9.8px;height:1px;background:#2a2a2a"></div>
<div class="t" style="left:84px;top:67px;font-size:12.6px;line-height:12.6px;font-weight:bold;color:#2a2a2a;font-family:'Liberation Sans',sans-serif;transform:scaleX(1.1650);transform-origin:0 0;">Projections</div>
<div style="left:736px;top:53px;width:11px;height:7px;background:#0000ff;border:1px solid #00000022;"></div>
<div style="left:749px;top:53px;width:11px;height:7px;background:#00ee00;border:1px solid #00000022;"></div>
<div style="left:762px;top:53px;width:11px;height:7px;background:#00ee00;border:1px solid #00000022;"></div>
<div style="left:775px;top:53px;width:11px;height:7px;background:#00ee00;border:1px solid #00000022;"></div>
<div style="left:788px;top:53px;width:11px;height:7px;background:#00ee00;border:1px solid #00000022;"></div>
<div style="left:801px;top:53px;width:11px;height:7px;background:#00ee00;border:1px solid #00000022;"></div>
<div style="left:814px;top:53px;width:11px;height:7px;background:#00ee00;border:1px solid #00000022;"></div>
<div style="left:827px;top:53px;width:11px;height:7px;background:#00ee00;border:1px solid #00000022;"></div>
<div style="left:737px;top:61px;width:132px;height:21px;background:linear-gradient(#e6eef8,#dfe8f2);border:1px solid #7f9db9;"></div>
<div class="t" style="left:740px;top:67px;font-size:11px;line-height:11px;font-weight:normal;color:#333;font-family:'Liberation Sans',sans-serif;transform:scaleX(0.9544);transform-origin:0 0;-webkit-text-stroke:0.25px #333;">0000-12-30 00:00:00Z</div>
<div style="left:849px;top:62px;width:19px;height:19px;background:linear-gradient(#f0f5fb,#cfdcea);border-left:1px solid #9ab;"></div>
<svg style="left:853px;top:68px" width="11" height="7"><path d="M0 0h11L5.5 6z" fill="#222"/></svg>
<div style="left:874px;top:62px;width:17px;height:18px;background:#eeeeee;border:1px solid #b4b4b4;"></div>
<svg style="left:874px;top:62px" width="17" height="18"><path d="M8 3L2 8.5L8 14ZM15 3L9 8.5L15 14Z" fill="#7a84c0" stroke="#4a5490" stroke-width="0.6"/></svg>
<div style="left:893px;top:62px;width:17px;height:18px;background:#eeeeee;border:1px solid #b4b4b4;"></div>
<svg style="left:893px;top:62px" width="17" height="18"><path d="M10 3L4 8.5L10 14Z" fill="#7a84c0" stroke="#4a5490" stroke-width="0.6"/><rect x="11" y="4" width="2" height="9" fill="#7a84c0" stroke="#4a5490" stroke-width="0.5"/></svg>
<div style="left:912px;top:62px;width:17px;height:18px;background:#eeeeee;border:1px solid #b4b4b4;"></div>
<svg style="left:912px;top:62px" width="17" height="18"><path d="M6 3L12 8.5L6 14Z" fill="#7a84c0" stroke="#4a5490" stroke-width="0.6"/></svg>
<div style="left:931px;top:62px;width:17px;height:18px;background:#eeeeee;border:1px solid #b4b4b4;"></div>
<svg style="left:931px;top:62px" width="17" height="18"><rect x="3" y="4" width="2" height="9" fill="#7a84c0" stroke="#4a5490" stroke-width="0.5"/><path d="M7 3L13 8.5L7 14Z" fill="#7a84c0" stroke="#4a5490" stroke-width="0.6"/></svg>
<div style="left:950px;top:62px;width:17px;height:18px;background:#eeeeee;border:1px solid #b4b4b4;"></div>
<svg style="left:950px;top:62px" width="17" height="18"><path d="M2 3L8 8.5L2 14ZM9 3L15 8.5L9 14Z" fill="#7a84c0" stroke="#4a5490" stroke-width="0.6"/></svg>
<div style="left:969px;top:62px;width:17px;height:18px;background:#eeeeee;border:1px solid #b4b4b4;"></div>
<svg style="left:969px;top:62px" width="17" height="18"><circle cx="8.5" cy="8.5" r="7" fill="#5a8ccc" stroke="#3a6aaa"/><circle cx="8.5" cy="5" r="1.2" fill="#fff"/><rect x="7.5" y="7" width="2" height="5.5" fill="#fff"/></svg>
<svg style="left:993px;top:51px" width="8" height="650"><path d="M6 3 L1.5 7 L6 11Z" fill="#5a7cc0"/><path d="M2 19 L6.5 23 L2 27Z" fill="#5a7cc0"/><rect x="3.0" y="30" width="1.3" height="1.3" fill="#8a9ab8"/><rect x="4.5" y="34" width="1.3" height="1.3" fill="#8a9ab8"/><rect x="3.0" y="38" width="1.3" height="1.3" fill="#8a9ab8"/><rect x="4.5" y="42" width="1.3" height="1.3" fill="#8a9ab8"/><rect x="3.0" y="46" width="1.3" height="1.3" fill="#8a9ab8"/><rect x="4.5" y="50" width="1.3" height="1.3" fill="#8a9ab8"/><rect x="3.0" y="54" width="1.3" height="1.3" fill="#8a9ab8"/><rect x="4.5" y="58" width="1.3" height="1.3" fill="#8a9ab8"/><rect x="3.0" y="62" width="1.3" height="1.3" fill="#8a9ab8"/><rect x="4.5" y="66" width="1.3" height="1.3" fill="#8a9ab8"/><rect x="3.0" y="70" width="1.3" height="1.3" fill="#8a9ab8"/><rect x="4.5" y="74" width="1.3" height="1.3" fill="#8a9ab8"/><rect x="3.0" y="78" width="1.3" height="1.3" fill="#8a9ab8"/><rect x="4.5" y="82" width="1.3" height="1.3" fill="#8a9ab8"/><rect x="3.0" y="86" width="1.3" height="1.3" fill="#8a9ab8"/><rect x="4.5" y="90" width="1.3" height="1.3" fill="#8a9ab8"/><rect x="3.0" y="94" width="1.3" height="1.3" fill="#8a9ab8"/><rect x="4.5" y="98" width="1.3" height="1.3" fill="#8a9ab8"/><rect x="3.0" y="102" width="1.3" height="1.3" fill="#8a9ab8"/><rect x="4.5" y="106" width="1.3" height="1.3" fill="#8a9ab8"/><rect x="3.0" y="110" width="1.3" height="1.3" fill="#8a9ab8"/><rect x="4.5" y="114" width="1.3" height="1.3" fill="#8a9ab8"/><rect x="3.0" y="118" width="1.3" height="1.3" fill="#8a9ab8"/><rect x="4.5" y="122" width="1.3" height="1.3" fill="#8a9ab8"/><rect x="3.0" y="126" width="1.3" height="1.3" fill="#8a9ab8"/><rect x="4.5" y="130" width="1.3" height="1.3" fill="#8a9ab8"/><rect x="3.0" y="134" width="1.3" height="1.3" fill="#8a9ab8"/><rect x="4.5" y="138" width="1.3" height="1.3" fill="#8a9ab8"/><rect x="3.0" y="142" width="1.3" height="1.3" fill="#8a9ab8"/><rect x="4.5" y="146" width="1.3" height="1.3" fill="#8a9ab8"/><rect x="3.0" y="150" width="1.3" height="1.3" fill="#8a9ab8"/><rect x="4.5" y="154" width="1.3" height="1.3" fill="#8a9ab8"/><rect x="3.0" y="158" width="1.3" height="1.3" fill="#8a9ab8"/><rect x="4.5" y="162" width="1.3" height="1.3" fill="#8a9ab8"/><rect x="3.0" y="166" width="1.3" height="1.3" fill="#8a9ab8"/><rect x="4.5" y="170" width="1.3" height="1.3" fill="#8a9ab8"/><rect x="3.0" y="174" width="1.3" height="1.3" fill="#8a9ab8"/><rect x="4.5" y="178" width="1.3" height="1.3" fill="#8a9ab8"/><rect x="3.0" y="182" width="1.3" height="1.3" fill="#8a9ab8"/><rect x="4.5" y="186" width="1.3" height="1.3" fill="#8a9ab8"/><rect x="3.0" y="190" width="1.3" height="1.3" fill="#8a9ab8"/><rect x="4.5" y="194" width="1.3" height="1.3" fill="#8a9ab8"/><rect x="3.0" y="198" width="1.3" height="1.3" fill="#8a9ab8"/><rect x="4.5" y="202" width="1.3" height="1.3" fill="#8a9ab8"/><rect x="3.0" y="206" width="1.3" height="1.3" fill="#8a9ab8"/><rect x="4.5" y="210" width="1.3" height="1.3" fill="#8a9ab8"/><rect x="3.0" y="214" width="1.3" height="1.3" fill="#8a9ab8"/><rect x="4.5" y="218" width="1.3" height="1.3" fill="#8a9ab8"/><rect x="3.0" y="222" width="1.3" height="1.3" fill="#8a9ab8"/><rect x="4.5" y="226" width="1.3" height="1.3" fill="#8a9ab8"/><rect x="3.0" y="230" width="1.3" height="1.3" fill="#8a9ab8"/><rect x="4.5" y="234" width="1.3" height="1.3" fill="#8a9ab8"/><rect x="3.0" y="238" width="1.3" height="1.3" fill="#8a9ab8"/><rect x="4.5" y="242" width="1.3" height="1.3" fill="#8a9ab8"/><rect x="3.0" y="246" width="1.3" height="1.3" fill="#8a9ab8"/><rect x="4.5" y="250" width="1.3" height="1.3" fill="#8a9ab8"/><rect x="3.0" y="254" width="1.3" height="1.3" fill="#8a9ab8"/><rect x="4.5" y="258" width="1.3" height="1.3" fill="#8a9ab8"/><rect x="3.0" y="262" width="1.3" height="1.3" fill="#8a9ab8"/><rect x="4.5" y="266" width="1.3" height="1.3" fill="#8a9ab8"/><rect x="3.0" y="270" width="1.3" height="1.3" fill="#8a9ab8"/><rect x="4.5" y="274" width="1.3" height="1.3" fill="#8a9ab8"/><rect x="3.0" y="278" width="1.3" height="1.3" fill="#8a9ab8"/><rect x="4.5" y="282" width="1.3" height="1.3" fill="#8a9ab8"/><rect x="3.0" y="286" width="1.3" height="1.3" fill="#8a9ab8"/><rect x="4.5" y="290" width="1.3" height="1.3" fill="#8a9ab8"/><rect x="3.0" y="294" width="1.3" height="1.3" fill="#8a9ab8"/><rect x="4.5" y="298" width="1.3" height="1.3" fill="#8a9ab8"/><rect x="3.0" y="302" width="1.3" height="1.3" fill="#8a9ab8"/><rect x="4.5" y="306" width="1.3" height="1.3" fill="#8a9ab8"/><rect x="3.0" y="310" width="1.3" height="1.3" fill="#8a9ab8"/><rect x="4.5" y="314" width="1.3" height="1.3" fill="#8a9ab8"/><rect x="3.0" y="318" width="1.3" height="1.3" fill="#8a9ab8"/><rect x="4.5" y="322" width="1.3" height="1.3" fill="#8a9ab8"/><rect x="3.0" y="326" width="1.3" height="1.3" fill="#8a9ab8"/><rect x="4.5" y="330" width="1.3" height="1.3" fill="#8a9ab8"/><rect x="3.0" y="334" width="1.3" height="1.3" fill="#8a9ab8"/><rect x="4.5" y="338" width="1.3" height="1.3" fill="#8a9ab8"/><rect x="3.0" y="342" width="1.3" height="1.3" fill="#8a9ab8"/><rect x="4.5" y="346" width="1.3" height="1.3" fill="#8a9ab8"/><rect x="3.0" y="350" width="1.3" height="1.3" fill="#8a9ab8"/><rect x="4.5" y="354" width="1.3" height="1.3" fill="#8a9ab8"/><rect x="3.0" y="358" width="1.3" height="1.3" fill="#8a9ab8"/><rect x="4.5" y="362" width="1.3" height="1.3" fill="#8a9ab8"/><rect x="3.0" y="366" width="1.3" height="1.3" fill="#8a9ab8"/><rect x="4.5" y="370" width="1.3" height="1.3" fill="#8a9ab8"/><rect x="3.0" y="374" width="1.3" height="1.3" fill="#8a9ab8"/><rect x="4.5" y="378" width="1.3" height="1.3" fill="#8a9ab8"/><rect x="3.0" y="382" width="1.3" height="1.3" fill="#8a9ab8"/><rect x="4.5" y="386" width="1.3" height="1.3" fill="#8a9ab8"/><rect x="3.0" y="390" width="1.3" height="1.3" fill="#8a9ab8"/><rect x="4.5" y="394" width="1.3" height="1.3" fill="#8a9ab8"/><rect x="3.0" y="398" width="1.3" height="1.3" fill="#8a9ab8"/><rect x="4.5" y="402" width="1.3" height="1.3" fill="#8a9ab8"/><rect x="3.0" y="406" width="1.3" height="1.3" fill="#8a9ab8"/><rect x="4.5" y="410" width="1.3" height="1.3" fill="#8a9ab8"/><rect x="3.0" y="414" width="1.3" height="1.3" fill="#8a9ab8"/><rect x="4.5" y="418" width="1.3" height="1.3" fill="#8a9ab8"/><rect x="3.0" y="422" width="1.3" height="1.3" fill="#8a9ab8"/><rect x="4.5" y="426" width="1.3" height="1.3" fill="#8a9ab8"/><rect x="3.0" y="430" width="1.3" height="1.3" fill="#8a9ab8"/><rect x="4.5" y="434" width="1.3" height="1.3" fill="#8a9ab8"/><rect x="3.0" y="438" width="1.3" height="1.3" fill="#8a9ab8"/><rect x="4.5" y="442" width="1.3" height="1.3" fill="#8a9ab8"/><rect x="3.0" y="446" width="1.3" height="1.3" fill="#8a9ab8"/><rect x="4.5" y="450" width="1.3" height="1.3" fill="#8a9ab8"/><rect x="3.0" y="454" width="1.3" height="1.3" fill="#8a9ab8"/><rect x="4.5" y="458" width="1.3" height="1.3" fill="#8a9ab8"/><rect x="3.0" y="462" width="1.3" height="1.3" fill="#8a9ab8"/><rect x="4.5" y="466" width="1.3" height="1.3" fill="#8a9ab8"/><rect x="3.0" y="470" width="1.3" height="1.3" fill="#8a9ab8"/><rect x="4.5" y="474" width="1.3" height="1.3" fill="#8a9ab8"/><rect x="3.0" y="478" width="1.3" height="1.3" fill="#8a9ab8"/><rect x="4.5" y="482" width="1.3" height="1.3" fill="#8a9ab8"/><rect x="3.0" y="486" width="1.3" height="1.3" fill="#8a9ab8"/><rect x="4.5" y="490" width="1.3" height="1.3" fill="#8a9ab8"/><rect x="3.0" y="494" width="1.3" height="1.3" fill="#8a9ab8"/><rect x="4.5" y="498" width="1.3" height="1.3" fill="#8a9ab8"/><rect x="3.0" y="502" width="1.3" height="1.3" fill="#8a9ab8"/><rect x="4.5" y="506" width="1.3" height="1.3" fill="#8a9ab8"/><rect x="3.0" y="510" width="1.3" height="1.3" fill="#8a9ab8"/><rect x="4.5" y="514" width="1.3" height="1.3" fill="#8a9ab8"/><rect x="3.0" y="518" width="1.3" height="1.3" fill="#8a9ab8"/><rect x="4.5" y="522" width="1.3" height="1.3" fill="#8a9ab8"/><rect x="3.0" y="526" width="1.3" height="1.3" fill="#8a9ab8"/><rect x="4.5" y="530" width="1.3" height="1.3" fill="#8a9ab8"/><rect x="3.0" y="534" width="1.3" height="1.3" fill="#8a9ab8"/><rect x="4.5" y="538" width="1.3" height="1.3" fill="#8a9ab8"/><rect x="3.0" y="542" width="1.3" height="1.3" fill="#8a9ab8"/><rect x="4.5" y="546" width="1.3" height="1.3" fill="#8a9ab8"/><rect x="3.0" y="550" width="1.3" height="1.3" fill="#8a9ab8"/><rect x="4.5" y="554" width="1.3" height="1.3" fill="#8a9ab8"/><rect x="3.0" y="558" width="1.3" height="1.3" fill="#8a9ab8"/><rect x="4.5" y="562" width="1.3" height="1.3" fill="#8a9ab8"/><rect x="3.0" y="566" width="1.3" height="1.3" fill="#8a9ab8"/><rect x="4.5" y="570" width="1.3" height="1.3" fill="#8a9ab8"/><rect x="3.0" y="574" width="1.3" height="1.3" fill="#8a9ab8"/><rect x="4.5" y="578" width="1.3" height="1.3" fill="#8a9ab8"/><rect x="3.0" y="582" width="1.3" height="1.3" fill="#8a9ab8"/><rect x="4.5" y="586" width="1.3" height="1.3" fill="#8a9ab8"/><rect x="3.0" y="590" width="1.3" height="1.3" fill="#8a9ab8"/><rect x="4.5" y="594" width="1.3" height="1.3" fill="#8a9ab8"/><rect x="3.0" y="598" width="1.3" height="1.3" fill="#8a9ab8"/><rect x="4.5" y="602" width="1.3" height="1.3" fill="#8a9ab8"/><rect x="3.0" y="606" width="1.3" height="1.3" fill="#8a9ab8"/><rect x="4.5" y="610" width="1.3" height="1.3" fill="#8a9ab8"/><rect x="3.0" y="614" width="1.3" height="1.3" fill="#8a9ab8"/><rect x="4.5" y="618" width="1.3" height="1.3" fill="#8a9ab8"/><rect x="3.0" y="622" width="1.3" height="1.3" fill="#8a9ab8"/><rect x="4.5" y="626" width="1.3" height="1.3" fill="#8a9ab8"/></svg>
<div style="left:34px;top:85px;width:955px;height:609px;background:#ffffff;border:1px solid #8a8a8a;"></div>
<div style="left:10px;top:701px;width:107px;height:17px;background:#eeeeee;border:1px solid #7a7a7a;border-right-color:#fff;border-bottom-color:#fff;"></div>
<div style="left:118px;top:701px;width:672px;height:17px;background:#eeeeee;border:1px solid #7a7a7a;border-right-color:#fff;border-bottom-color:#fff;"></div>
<div class="t" style="left:21px;top:703px;font-size:13px;line-height:13px;font-weight:normal;color:#222;font-family:'Liberation Sans',sans-serif;transform:scaleX(1.0829);transform-origin:0 0;-webkit-text-stroke:0.5px #222;">16:29:57 GMT</div>
<div class="t" style="left:120.5px;top:703px;font-size:13px;line-height:13px;font-weight:normal;color:#222;font-family:'Liberation Sans',sans-serif;transform:scaleX(1.2948);transform-origin:0 0;-webkit-text-stroke:0.5px #222;">Latitude:</div>
<div class="t" style="left:193.9px;top:703px;font-size:13px;line-height:13px;font-weight:normal;color:#222;font-family:'Liberation Sans',sans-serif;transform:scaleX(1.1646);transform-origin:0 0;-webkit-text-stroke:0.5px #222;">11.142</div>
<div class="t" style="left:244.5px;top:703px;font-size:13px;line-height:13px;font-weight:normal;color:#222;font-family:'Liberation Sans',sans-serif;transform:scaleX(1.2148);transform-origin:0 0;-webkit-text-stroke:0.5px #222;">Longitude:</div>
<div class="t" style="left:324.5px;top:703px;font-size:13px;line-height:13px;font-weight:normal;color:#222;font-family:'Liberation Sans',sans-serif;transform:scaleX(1.1335);transform-origin:0 0;-webkit-text-stroke:0.5px #222;">-86.313</div>
<div class="t" style="left:377.5px;top:703px;font-size:13px;line-height:13px;font-weight:normal;color:#222;font-family:'Liberation Sans',sans-serif;transform:scaleX(1.2813);transform-origin:0 0;-webkit-text-stroke:0.5px #222;">Altitude:</div>
<div class="t" style="left:442.9px;top:703px;font-size:13px;line-height:13px;font-weight:normal;color:#222;font-family:'Liberation Sans',sans-serif;transform:scaleX(1.1394);transform-origin:0 0;-webkit-text-stroke:0.5px #222;">-379.980</div>
<div class="t" style="left:504.0px;top:703px;font-size:13px;line-height:13px;font-weight:normal;color:#222;font-family:'Liberation Sans',sans-serif;transform:scaleX(1.1888);transform-origin:0 0;-webkit-text-stroke:0.5px #222;">km</div>
<div style="left:1001px;top:50px;width:344px;height:205px;background:linear-gradient(#eeeeee 190px,#e4e4e4 200px,#c8c8c8);"></div>
<div style="left:1001px;top:50px;width:2px;height:205px;background:#8d9dab;"></div>
<div style="left:1340px;top:52px;width:2px;height:203px;background:#8d9dab;"></div>
<div class="t" style="left:1134px;top:53px;font-size:15px;line-height:15px;font-weight:normal;color:#222;font-family:'Liberation Sans',sans-serif;transform:scaleX(1.1785);transform-origin:0 0;-webkit-text-stroke:0.25px #222;">Legend</div>
<svg style="left:1325px;top:54px" width="17" height="15" viewBox="0 0 17 15"><rect x="0.5" y="0.5" width="15" height="12" fill="#f4f7fc" stroke="#5a84c8"/><rect x="1" y="1" width="14" height="2" fill="#8fb0e0"/><path d="M12.5 6.5 L16.5 10.5 H14.5 V14.5 H10.5 V10.5 H8.5Z" fill="#4aa83a" stroke="#2a7a20" stroke-width="0.6"/></svg>
<div style="left:1004px;top:72px;width:336px;height:1px;background:#000;"></div>
<div style="left:1004px;top:73px;width:336px;height:1px;background:#666;"></div>
<div style="left:1004px;top:88px;width:336px;height:1px;background:#000;"></div>
<div style="left:1004px;top:89px;width:336px;height:1px;background:#666;"></div>
<div style="left:1004px;top:143px;width:336px;height:1px;background:#000;"></div>
<div style="left:1004px;top:144px;width:336px;height:1px;background:#666;"></div>
<div style="left:1004px;top:159px;width:336px;height:1px;background:#000;"></div>
<div style="left:1004px;top:160px;width:336px;height:1px;background:#666;"></div>
<div style="left:1004px;top:201px;width:336px;height:1px;background:#000;"></div>
<div style="left:1004px;top:202px;width:336px;height:1px;background:#666;"></div>
<div style="left:1004px;top:218px;width:336px;height:1px;background:#000;"></div>
<div style="left:1004px;top:219px;width:336px;height:1px;background:#666;"></div>
<svg style="left:1007px;top:76px" width="9" height="9" viewBox="0 0 9 9"><rect x="0.5" y="0.5" width="8" height="8" fill="#ffffcc" stroke="#000"/><path d="M2 4.5h5" stroke="#000"/></svg>
<svg style="left:1020px;top:74px" width="13" height="13" viewBox="0 0 13 13"><rect x="0.5" y="0.5" width="12" height="12" fill="#dde8f2" stroke="#8a9cb0"/><path d="M3.5 6.5 L5.5 9.5 L9.5 3.5" fill="none" stroke="#111" stroke-width="1.6"/></svg>
<div class="t" style="left:1041px;top:73px;font-size:14.5px;line-height:14.5px;font-weight:bold;color:#333;font-family:'Liberation Sans',sans-serif;">Maps</div>
<svg style="left:1010px;top:98px" width="9" height="9" viewBox="0 0 9 9"><rect x="0.5" y="0.5" width="8" height="8" fill="#ffffcc" stroke="#000"/><path d="M2 4.5h5" stroke="#000"/></svg>
<svg style="left:1023px;top:96px" width="13" height="13" viewBox="0 0 13 13"><rect x="0.5" y="0.5" width="12" height="12" fill="#dde8f2" stroke="#8a9cb0"/><path d="M3.5 6.5 L5.5 9.5 L9.5 3.5" fill="none" stroke="#111" stroke-width="1.6"/></svg>
<div class="t" style="left:1042px;top:95px;font-size:14.5px;line-height:14.5px;font-weight:bold;color:#2a5ef0;font-family:'Liberation Sans',sans-serif;transform:scaleX(1.0176);transform-origin:0 0;">Default Background Maps</div>
<div style="left:1042px;top:107px;width:182px;height:1px;background:#2a5ef0;"></div>
<svg style="left:1306px;top:93px" width="15" height="16" viewBox="0 0 15 16"><path d="M3 7 V4.5 Q3 1 7 1 Q11 1 11 4.5 V7" fill="none" stroke="#999" stroke-width="1.8"/><rect x="0.8" y="7" width="13" height="8.2" fill="#f7d35a" stroke="#d8902a"/><path d="M3 10h3M8.5 10h3M3 12.5h3M8.5 12.5h3" stroke="#c8902a"/><rect x="6.5" y="9.5" width="1.5" height="3" fill="#8a5a1a"/></svg>
<svg style="left:1327px;top:94px" width="12" height="15" viewBox="0 0 12 15"><path d="M1.5 2.5 Q6 0 10.5 2.5 V13 Q6 15 1.5 13Z" fill="#ececec" stroke="#888"/><path d="M1.5 3.5 Q6 5 10.5 3.5" fill="none" stroke="#888"/><path d="M4.5 6v6M7.5 6v6" stroke="#bbb"/><rect x="4" y="0.5" width="4" height="2" fill="#ddd" stroke="#888" stroke-width="0.6"/></svg>
<div class="t" style="left:1012px;top:112px;font-size:10.6px;line-height:10.6px;font-weight:bold;color:#333;font-family:'Liberation Sans',sans-serif;transform:scaleX(1.0872);transform-origin:0 0;">World Country Outlines</div>
<div class="t" style="left:1012px;top:125px;font-size:10.6px;line-height:10.6px;font-weight:bold;color:#333;font-family:'Liberation Sans',sans-serif;transform:scaleX(1.0775);transform-origin:0 0;">World Coastlines</div>
<svg style="left:1007px;top:147px" width="9" height="9" viewBox="0 0 9 9"><rect x="0.5" y="0.5" width="8" height="8" fill="#ffffcc" stroke="#000"/><path d="M2 4.5h5" stroke="#000"/></svg>
<svg style="left:1020px;top:145px" width="13" height="13" viewBox="0 0 13 13"><rect x="0.5" y="0.5" width="12" height="12" fill="#dde8f2" stroke="#8a9cb0"/><path d="M3.5 6.5 L5.5 9.5 L9.5 3.5" fill="none" stroke="#111" stroke-width="1.6"/></svg>
<div class="t" style="left:1041px;top:144px;font-size:14.5px;line-height:14.5px;font-weight:bold;color:#333;font-family:'Liberation Sans',sans-serif;transform:scaleX(1.0320);transform-origin:0 0;">Point Data</div>
<svg style="left:1010px;top:168px" width="9" height="9" viewBox="0 0 9 9"><rect x="0.5" y="0.5" width="8" height="8" fill="#ffffcc" stroke="#000"/><path d="M2 4.5h5" stroke="#000"/></svg>
<svg style="left:1023px;top:166px" width="13" height="13" viewBox="0 0 13 13"><rect x="0.5" y="0.5" width="12" height="12" fill="#dde8f2" stroke="#8a9cb0"/><path d="M3.5 6.5 L5.5 9.5 L9.5 3.5" fill="none" stroke="#111" stroke-width="1.6"/></svg>
<div class="t" style="left:1042px;top:165px;font-size:14.5px;line-height:14.5px;font-weight:bold;color:#2a5ef0;font-family:'Liberation Sans',sans-serif;transform:scaleX(1.0644);transform-origin:0 0;">Text Point Data - Point Data Plot C...</div>
<div style="left:1042px;top:177px;width:263px;height:1px;background:#2a5ef0;"></div>
<svg style="left:1306px;top:163px" width="15" height="16" viewBox="0 0 15 16"><path d="M3 7 V4 Q3 1 6 1 Q8.5 1 8.5 3" fill="none" stroke="#999" stroke-width="1.8"/><rect x="0.8" y="7" width="13" height="8.2" fill="#f7d35a" stroke="#d8902a"/><path d="M3 10h3M8.5 10h3M3 12.5h3M8.5 12.5h3" stroke="#c8902a"/><rect x="6.5" y="9.5" width="1.5" height="3" fill="#8a5a1a"/></svg>
<svg style="left:1327px;top:164px" width="12" height="15" viewBox="0 0 12 15"><path d="M1.5 2.5 Q6 0 10.5 2.5 V13 Q6 15 1.5 13Z" fill="#ececec" stroke="#888"/><path d="M1.5 3.5 Q6 5 10.5 3.5" fill="none" stroke="#888"/><path d="M4.5 6v6M7.5 6v6" stroke="#bbb"/><rect x="4" y="0.5" width="4" height="2" fill="#ddd" stroke="#888" stroke-width="0.6"/></svg>
<div class="t" style="left:1011px;top:184px;font-size:10.6px;line-height:10.6px;font-weight:bold;color:#333;font-family:'Liberation Sans',sans-serif;transform:scaleX(1.0987);transform-origin:0 0;">Layout model:Location</div>
<svg style="left:1007px;top:206px" width="9" height="9" viewBox="0 0 9 9"><rect x="0.5" y="0.5" width="8" height="8" fill="#ffffcc" stroke="#000"/><path d="M2 4.5h5" stroke="#000"/></svg>
<svg style="left:1020px;top:204px" width="13" height="13" viewBox="0 0 13 13"><rect x="0.5" y="0.5" width="12" height="12" fill="#dde8f2" stroke="#8a9cb0"/><path d="M3.5 6.5 L5.5 9.5 L9.5 3.5" fill="none" stroke="#111" stroke-width="1.6"/></svg>
<div class="t" style="left:1041px;top:203px;font-size:14.5px;line-height:14.5px;font-weight:bold;color:#333;font-family:'Liberation Sans',sans-serif;transform:scaleX(1.0185);transform-origin:0 0;">General</div>
<svg style="left:1010px;top:227px" width="9" height="9" viewBox="0 0 9 9"><rect x="0.5" y="0.5" width="8" height="8" fill="#ffffcc" stroke="#000"/><path d="M2 4.5h5" stroke="#000"/></svg>
<svg style="left:1023px;top:225px" width="13" height="13" viewBox="0 0 13 13"><rect x="0.5" y="0.5" width="12" height="12" fill="#dde8f2" stroke="#8a9cb0"/><path d="M3.5 6.5 L5.5 9.5 L9.5 3.5" fill="none" stroke="#111" stroke-width="1.6"/></svg>
<div class="t" style="left:1042px;top:224px;font-size:14.5px;line-height:14.5px;font-weight:bold;color:#2a5ef0;font-family:'Liberation Sans',sans-serif;transform:scaleX(1.0314);transform-origin:0 0;">Transect Drawing Control</div>
<div style="left:1042px;top:236px;width:182px;height:1px;background:#2a5ef0;"></div>
<svg style="left:1306px;top:222px" width="15" height="16" viewBox="0 0 15 16"><path d="M3 7 V4 Q3 1 6 1 Q8.5 1 8.5 3" fill="none" stroke="#999" stroke-width="1.8"/><rect x="0.8" y="7" width="13" height="8.2" fill="#f7d35a" stroke="#d8902a"/><path d="M3 10h3M8.5 10h3M3 12.5h3M8.5 12.5h3" stroke="#c8902a"/><rect x="6.5" y="9.5" width="1.5" height="3" fill="#8a5a1a"/></svg>
<svg style="left:1327px;top:223px" width="12" height="15" viewBox="0 0 12 15"><path d="M1.5 2.5 Q6 0 10.5 2.5 V13 Q6 15 1.5 13Z" fill="#ececec" stroke="#888"/><path d="M1.5 3.5 Q6 5 10.5 3.5" fill="none" stroke="#888"/><path d="M4.5 6v6M7.5 6v6" stroke="#bbb"/><rect x="4" y="0.5" width="4" height="2" fill="#ddd" stroke="#888" stroke-width="0.6"/></svg>
<svg style="left:0;top:0" width="1442" height="1078"><defs><clipPath id="mc"><rect x="35" y="86" width="953" height="607"/></clipPath></defs><g clip-path="url(#mc)"><path d="M463.5 86V693M912.5 86V693M35 323.5H990" stroke="#8c8c8c" stroke-width="1.2"/><rect x="319.5" y="230.5" width="352" height="352" fill="none" stroke="#000" stroke-width="1.4"/><polyline points="251.7,86.0 253.3,89.8 266.6,99.0 269.1,101.5 271.6,104.8 275.0,107.3 302.4,124.8 318.2,150.6 326.5,162.2 336.5,168.9 341.5,177.2 353.2,185.5 361.5,192.2 378.2,203.8 385.3,212.3 389.5,216.5 392.3,223.1 400.6,227.0 404.0,230.1 400.0,230.1 398.4,229.3 395.3,232.3 397.3,233.1 401.7,236.5 398.4,237.6 397.8,240.4 392.8,239.3 391.7,242.0 389.5,240.9 388.9,238.2 385.0,238.4 384.5,240.9 381.1,242.6 378.1,243.7 382.8,245.4 385.6,246.5" fill="none" stroke="#00cc00" stroke-width="1" stroke-linejoin="round"/><polyline points="387.3,247.3 392.5,247.6 391.7,250.4 395.0,251.5 396.7,250.4 400.6,251.0 402.8,254.8 403.4,259.9 404.8,260.4 404.5,263.5 401.7,263.8 402.3,266.7 404.5,269.5 400.0,273.9 391.1,276.2 392.2,284.5 385.6,290.1 386.7,294.6 396.7,321.3 403.4,332.4 411.2,335.8 433.5,339.1 440.1,345.8 446.8,355.8 452.4,363.6 456.8,353.6 462.4,349.1 466.9,348.0 472.4,342.4 474.7,339.7 471.3,338.0 469.1,334.6 470.2,329.6 462.4,329.6 449.0,322.4 448.0,320.2 440.7,313.5 440.7,302.3 445.0,304.0 451.3,310.1 455.7,309.0 461.3,313.5 474.7,323.5 481.5,325.0 488.7,326.2 494.8,345.5 492.4,357.5 503.2,366.0 515.3,364.8 534.6,372.0 553.9,381.6 573.2,398.5 585.2,413.0 590.1,425.0 585.2,432.3 578.0,444.4 578.0,452.8 594.9,463.7 604.5,463.7 609.3,465.2 617.7,470.0 618.9,461.6 614.1,453.1 599.6,442.3 590.0,423.0" fill="none" stroke="#00cc00" stroke-width="1" stroke-linejoin="round"/><polyline points="590.0,423.0 599.6,437.4 609.3,439.9 614.1,444.7 626.2,447.1 632.2,450.7 633.4,454.3 631.0,468.8 643.0,478.4 647.9,491.7 652.7,500.1 656.3,496.5 655.1,485.7 653.9,477.2 672.0,474.8 693.7,472.4 696.1,478.4 708.2,473.6 714.2,473.6 715.4,485.7 720.2,483.3 734.7,486.9 754.0,490.5 756.4,492.9 761.2,500.1 768.4,509.8 773.3,524.3 778.0,525.5 782.9,531.5 790.0,533.0" fill="none" stroke="#00cc00" stroke-width="1" stroke-linejoin="round"/><polyline points="591.4,87.0 586.9,90.7 580.2,94.0 575.0,94.4 573.2,97.7 572.4,101.4 577.3,100.7 577.6,110.0 578.8,113.3 581.4,112.6 582.8,117.4 584.7,112.6 587.3,114.1 582.8,123.3 581.4,128.5 580.6,133.0 577.6,128.9 572.4,128.9 578.8,133.0 577.3,137.5 571.3,139.3 575.0,141.9 573.9,149.3 568.4,155.6 573.2,161.2 576.5,161.2 578.0,157.1 580.2,157.5 581.7,164.0 584.5,179.5 574.4,184.2 572.7,193.6 566.1,203.1 565.6,216.0 570.8,230.2 576.0,238.0 578.8,241.2 580.6,239.8 584.3,240.7 589.4,246.3 589.9,250.9 587.1,249.0 587.6,252.8 591.8,260.0 596.8,270.3 606.2,286.8 615.3,300.0 633.4,322.9 640.6,324.1 641.8,328.9 660.0,347.0 660.0,348.3 661.9,352.0 670.2,356.7 675.8,356.2 681.3,361.8 699.9,375.7 703.6,376.2 698.0,382.7 700.8,385.5 697.1,388.2 700.8,393.8 705.5,397.0 709.2,399.4 710.1,404.9 710.6,413.3 720.3,415.6 724.9,419.8 733.3,418.8 741.6,416.1 751.8,419.3 753.7,416.1 749.1,410.5 740.7,401.7 743.5,399.4 749.1,404.0 754.6,407.7 761.1,414.2 767.6,424.4 777.8,432.8 790.0,434.0" fill="none" stroke="#00cc00" stroke-width="1" stroke-linejoin="round"/><polyline points="591.4,85.5 591.4,92.5 586.2,92.5 586.2,101.8 588.8,105.5 586.6,109.2 588.8,110.0 597.7,109.6 599.5,107.8 599.5,101.8 595.8,93.7 595.5,85.5" fill="none" stroke="#00cc00" stroke-width="1" stroke-linejoin="round"/><polyline points="579.5,136.0 582.5,145.6" fill="none" stroke="#00cc00" stroke-width="1" stroke-linejoin="round"/><polyline points="578.0,145.6 578.0,156.0" fill="none" stroke="#00cc00" stroke-width="1.6" stroke-linejoin="round"/><polyline points="703.6,376.2 708.2,374.3 712.9,379.9 711.0,383.1 704.5,376.6" fill="none" stroke="#00cc00" stroke-width="1" stroke-linejoin="round"/><polyline points="707.3,389.2 710.1,387.8 711.9,394.7 715.7,396.6 716.6,399.4 710.1,397.5 706.4,392.0 707.3,389.2" fill="none" stroke="#00cc00" stroke-width="1" stroke-linejoin="round"/><polyline points="714.7,383.6 719.4,382.7 724.9,385.9 720.3,390.6 718.4,386.4 715.7,386.4 714.7,383.6" fill="none" stroke="#00cc00" stroke-width="1" stroke-linejoin="round"/><polyline points="720.3,392.9 722.0,398.0 719.0,401.0 724.0,399.0 725.9,401.2" fill="none" stroke="#00cc00" stroke-width="1" stroke-linejoin="round"/><circle cx="730" cy="400.3" r="1.8" fill="none" stroke="#00cc00"/><circle cx="728.6" cy="390.6" r="0.6" fill="#00cc00"/><ellipse cx="758.5" cy="95" rx="1.3" ry="4" fill="none" stroke="#00cc00"/><ellipse cx="638" cy="128" rx="1.5" ry="1.5" fill="none" stroke="#00cc00"/><circle cx="644.6" cy="115.8" r="0.8" fill="#00cc00"/><circle cx="511.7" cy="389.6" r="0.7" fill="#000"/><polyline points="402.0,226.7 403.4,223.1 407.3,214.5 412.3,214.5 414.5,218.1 418.4,219.5 425.0,221.5 448.0,230.5 471.4,239.6 493.6,227.2 503.2,230.9 516.6,236.1 521.8,234.9 523.7,240.8 533.1,246.7 535.5,252.6 552.0,253.3 562.0,260.0 571.3,254.6 581.5,251.4 584.3,248.6 583.4,241.6 582.5,240.7" fill="none" stroke="#00e5ff" stroke-width="1" stroke-linejoin="round"/><polyline points="683.2,364.1 679.5,365.0 678.6,368.8 676.7,370.1 672.0,366.9 670.2,363.2 660.0,360.0 655.0,362.7 649.0,370.0 647.9,406.0 655.0,410.0 660.0,413.3 666.5,416.1 667.4,419.8 664.6,423.5 660.0,426.3 651.5,433.8 655.1,444.7 656.3,464.0 641.8,473.6 638.2,476.0 650.3,493.0 654.0,500.0" fill="none" stroke="#00e5ff" stroke-width="1" stroke-linejoin="round"/><polygon points="385.6,94 836,475 678.5,661.5 227.5,280.5" fill="none" stroke="#00e000" stroke-width="2.2"/><line x1="306" y1="187" x2="757.5" y2="569" stroke="#00e000" stroke-width="2"/><line x1="343" y1="219" x2="721" y2="537" stroke="#ff0000" stroke-width="4.2"/><line x1="343" y1="219" x2="721" y2="537" stroke="#00f000" stroke-width="2"/><path d="M330.5 192.5V218.5H343.5L346.5 215.5V210.32L343.5 207.32H330.5M343.5 207.32L346.5 204.32V195.5L343.5 192.5H330.5" fill="none" stroke="#ff0000" stroke-width="1.1"/><path d="M292.5 160.5V186.5H306.5L309.5 183.5V178.32L306.5 175.32H292.5M306.5 175.32L309.5 172.32V163.5L306.5 160.5H292.5" fill="none" stroke="#00e000" stroke-width="1.1"/><path d="M722.5 510.5H706.5V536.5H722.5M706.5 523.5H716.5" fill="none" stroke="#ff0000" stroke-width="1.1"/><path d="M760 542.5H744V568.5H760M744 555.5H755" fill="none" stroke="#00e000" stroke-width="1.1"/><path d="M306.0 266.5H329.0M317.5 255.0V278.0" stroke="#ff00ff" stroke-width="3"/><path d="M359.0 268H382.0M370.5 256.5V279.5" stroke="#ff00ff" stroke-width="3"/><path d="M382.0 339.5H405.0M393.5 328.0V351.0" stroke="#ff00ff" stroke-width="3"/><path d="M514.5 304H537.5M526 292.5V315.5" stroke="#ff00ff" stroke-width="3"/><path d="M531.0 294H554.0M542.5 282.5V305.5" stroke="#ff00ff" stroke-width="3"/><path d="M511.5 321.5H534.5M523 310.0V333.0" stroke="#ff00ff" stroke-width="3"/><path d="M636.5 481H659.5M648 469.5V492.5" stroke="#ff00ff" stroke-width="3"/><path d="M658.5 546.5H681.5M670 535.0V558.0" stroke="#ff00ff" stroke-width="3"/></g></svg>
<div style="left:788px;top:254px;width:663px;height:471px;box-shadow:0 0 7px 2px rgba(0,0,0,0.25);border-radius:7px 0 0 5px;"></div>
<div style="left:789px;top:255px;width:653px;height:470px;background:linear-gradient(#eeeeee 460px,#f4f4f2);border-radius:6px 0 0 5px;overflow:hidden;"></div>
<div style="left:789px;top:255px;width:653px;height:26px;background:linear-gradient(#f6f2e6,#ede6d2 50%,#e2d9bf);border-radius:6px 0 0 0;border-top:1px solid #d8d0b8;"></div>
<div style="left:1345px;top:256px;width:97px;height:25px;background:linear-gradient(90deg,rgba(200,210,215,0.45),rgba(215,222,226,0.45) 60%,rgba(240,238,230,0.4));"></div>
<div style="left:1341px;top:256px;width:1px;height:25px;background:rgba(100,120,140,0.15);"></div>
<div style="left:912px;top:256px;width:1px;height:25px;background:rgba(120,120,120,0.12);"></div>
<div style="left:798px;top:259px;width:60px;height:19px;background:linear-gradient(#cfc6b0,#ddd5c2);border-radius:10px;"></div>
<div style="left:800px;top:260px;width:16px;height:16px;background:radial-gradient(circle at 50% 40%,#e2e0dc,#cfcdc8);border-radius:50%;border:1px solid #b9b5ac;"></div>
<div style="left:820px;top:260px;width:16px;height:16px;background:radial-gradient(circle at 50% 40%,#e2e0dc,#cfcdc8);border-radius:50%;border:1px solid #b9b5ac;"></div>
<div style="left:840px;top:260px;width:16px;height:16px;background:radial-gradient(circle at 50% 40%,#e2e0dc,#cfcdc8);border-radius:50%;border:1px solid #b9b5ac;"></div>
<svg style="left:800px;top:260px" width="60" height="16"><path d="M5 5L11 11M11 5L5 11" stroke="#9a9a9a" stroke-width="1.1"/><path d="M25 6.5L28 9.5L31 6.5" fill="none" stroke="#9a9a9a" stroke-width="1.1"/><path d="M45 9.5L48 6.5L51 9.5" fill="none" stroke="#9a9a9a" stroke-width="1.1"/></svg>
<div class="t" style="left:869.7px;top:261px;font-size:14.5px;line-height:14.5px;font-weight:bold;color:#6b6b6b;font-family:'Liberation Sans',sans-serif;transform:scaleX(1.0202);transform-origin:0 0;">UNAVCO</div>
<div class="t" style="left:936.9px;top:261px;font-size:14.5px;line-height:14.5px;font-weight:bold;color:#6b6b6b;font-family:'Liberation Sans',sans-serif;transform:scaleX(1.0922);transform-origin:0 0;">IDV</div>
<div class="t" style="left:967.4px;top:261px;font-size:14.5px;line-height:14.5px;font-weight:bold;color:#6b6b6b;font-family:'Liberation Sans',sans-serif;transform:scaleX(1.3256);transform-origin:0 0;">-</div>
<div class="t" style="left:980.2px;top:261px;font-size:14.5px;line-height:14.5px;font-weight:bold;color:#6b6b6b;font-family:'Liberation Sans',sans-serif;transform:scaleX(1.0597);transform-origin:0 0;">Transect</div>
<div class="t" style="left:1047.5px;top:261px;font-size:14.5px;line-height:14.5px;font-weight:bold;color:#6b6b6b;font-family:'Liberation Sans',sans-serif;transform:scaleX(1.1256);transform-origin:0 0;">View</div>
<div class="t" style="left:1088.6px;top:261px;font-size:14.5px;line-height:14.5px;font-weight:bold;color:#6b6b6b;font-family:'Liberation Sans',sans-serif;transform:scaleX(1.2013);transform-origin:0 0;">-</div>
<div class="t" style="left:1099.7px;top:261px;font-size:14.5px;line-height:14.5px;font-weight:bold;color:#6b6b6b;font-family:'Liberation Sans',sans-serif;transform:scaleX(1.0318);transform-origin:0 0;">One</div>
<div class="t" style="left:1133.5px;top:261px;font-size:14.5px;line-height:14.5px;font-weight:bold;color:#6b6b6b;font-family:'Liberation Sans',sans-serif;transform:scaleX(1.0821);transform-origin:0 0;">Pane</div>
<div style="left:789px;top:281px;width:653px;height:20px;background:linear-gradient(#fdfdfd,#f4f4f4 40%,#e2e2e2);"></div>
<div style="left:789px;top:301px;width:653px;height:1px;background:#c6c6c6;"></div>
<div style="left:795.0px;top:296px;width:9.1px;height:1px;background:#2a2a2a"></div>
<div class="t" style="left:795px;top:285px;font-size:12.6px;line-height:12.6px;font-weight:bold;color:#2a2a2a;font-family:'Liberation Sans',sans-serif;transform:scaleX(1.1888);transform-origin:0 0;">File</div>
<div style="left:832.0px;top:296px;width:9.9px;height:1px;background:#2a2a2a"></div>
<div class="t" style="left:832px;top:285px;font-size:12.6px;line-height:12.6px;font-weight:bold;color:#2a2a2a;font-family:'Liberation Sans',sans-serif;transform:scaleX(1.1754);transform-origin:0 0;">Edit</div>
<div style="left:871.0px;top:296px;width:10.4px;height:1px;background:#2a2a2a"></div>
<div class="t" style="left:871px;top:285px;font-size:12.6px;line-height:12.6px;font-weight:bold;color:#2a2a2a;font-family:'Liberation Sans',sans-serif;transform:scaleX(1.1473);transform-origin:0 0;">Displays</div>
<div style="left:955.2px;top:296px;width:8.6px;height:1px;background:#2a2a2a"></div>
<div class="t" style="left:944px;top:285px;font-size:12.6px;line-height:12.6px;font-weight:bold;color:#2a2a2a;font-family:'Liberation Sans',sans-serif;transform:scaleX(1.2268);transform-origin:0 0;">Data</div>
<div style="left:991.0px;top:296px;width:8.5px;height:1px;background:#2a2a2a"></div>
<div class="t" style="left:991px;top:285px;font-size:12.6px;line-height:12.6px;font-weight:bold;color:#2a2a2a;font-family:'Liberation Sans',sans-serif;transform:scaleX(1.1049);transform-origin:0 0;">Tools</div>
<div style="left:1042.0px;top:296px;width:10.8px;height:1px;background:#2a2a2a"></div>
<div class="t" style="left:1042px;top:285px;font-size:12.6px;line-height:12.6px;font-weight:bold;color:#2a2a2a;font-family:'Liberation Sans',sans-serif;transform:scaleX(1.1884);transform-origin:0 0;">Help</div>
<div style="left:789px;top:302px;width:653px;height:26px;background:#eeeeee;"></div>
<div style="left:789px;top:327px;width:653px;height:2px;background:#7f8a93;"></div>
<svg style="left:795px;top:307px" width="17" height="16" viewBox="0 0 17 16"><path d="M3 1 L7 6" stroke="#777" stroke-width="1" fill="none"/><path d="M4 6 Q8 4 12 5 Q16 7 16.5 12 Q16 14 14 13 L11 11 Q8 11 6 12 L4 15 Q1 15 1 11 Q1 7 4 6Z" fill="#e8e8e8" stroke="#999" stroke-width="0.9"/><path d="M3.5 9.5 h3 M5 8 v3" stroke="#3a3" stroke-width="1.2"/><circle cx="9" cy="8" r="1" fill="#48f"/><circle cx="11" cy="7" r="1" fill="#e33"/></svg>
<svg style="left:816px;top:307px" width="17" height="16" viewBox="0 0 17 16"><rect x="0.5" y="1.5" width="14" height="12" fill="#f4f7fc" stroke="#5a84c8"/><rect x="1" y="2" width="13" height="2" fill="#8fb0e0"/><circle cx="13" cy="13" r="3.3" fill="#3c9a2c" stroke="#2a7a20" stroke-width="0.6"/><path d="M11 13h4M13 11v4" stroke="#fff" stroke-width="1.3"/></svg>
<svg style="left:843px;top:307px" width="16" height="16" viewBox="0 0 16 16"><path d="M1 3.5h5l1.5 1.5h7.5v9h-14z" fill="#f7d26a" stroke="#d9962a" stroke-width="1"/><path d="M1.5 7h13.5" stroke="#fbe9a8" stroke-width="1.2"/></svg>
<svg style="left:862px;top:306px" width="17" height="17" viewBox="0 0 17 17"><path d="M0.5 0.5h14l2 2v14h-16z" fill="#5d8fd6" stroke="#3a68b8"/><rect x="3" y="1" width="10" height="6" fill="#e8eef8"/><rect x="4.5" y="2" width="1.5" height="3" fill="#3a68b8"/><rect x="2.5" y="10" width="12" height="5" fill="#dfe8f4"/><path d="M4 12h9M4 14h9" stroke="#6cbf4a" stroke-width="1"/></svg>
<svg style="left:883px;top:307px" width="16" height="16" viewBox="0 0 16 16"><rect x="0.5" y="0.5" width="10" height="9" fill="#e8eef8" stroke="#5a84c8"/><rect x="2.5" y="2.5" width="10" height="9" fill="#e8eef8" stroke="#5a84c8"/><path d="M4.5 4.5h9l1.5 1.5v9.5h-10.5z" fill="#5d8fd6" stroke="#3a68b8"/><rect x="6.5" y="5" width="6" height="3.5" fill="#e8eef8"/><rect x="6" y="11" width="8" height="3.5" fill="#dfe8f4"/><path d="M7 13h6" stroke="#6cbf4a"/></svg>
<svg style="left:903px;top:307px" width="17" height="16" viewBox="0 0 17 16"><path d="M8.5 0.5 L10.8 5.6 L16.3 6 L12.1 9.6 L13.4 15.2 L8.5 12.3 L3.6 15.2 L4.9 9.6 L0.7 6 L6.2 5.6Z" fill="#f2c21b" stroke="#d6951a" stroke-width="0.8"/></svg>
<svg style="left:931px;top:307px" width="16" height="16" viewBox="0 0 16 16"><circle cx="7.5" cy="7.5" r="7" fill="#dfe8f5" stroke="#6a8fc8"/><circle cx="7.5" cy="7.5" r="5.3" fill="#5d88c8"/><path d="M5.5 5.8 Q5.7 3.8 7.6 3.8 Q9.6 3.9 9.6 5.6 Q9.5 7 7.7 7.6 V8.8" stroke="#fff" stroke-width="1.6" fill="none"/><circle cx="7.7" cy="10.8" r="0.9" fill="#fff"/></svg>
<svg style="left:950px;top:307px" width="17" height="16" viewBox="0 0 17 16"><rect x="0.5" y="1.5" width="15" height="10" fill="#e8eefa" stroke="#5a84c8"/><path d="M1 2 L8 7.5 L15 2" stroke="#8aa8dc" fill="none"/><path d="M6 9.5h4v-2.5l5 4l-5 4v-2.5h-4z" fill="#56a63a" stroke="#2f7d22" stroke-width="0.7"/></svg>
<svg style="left:977px;top:307px" width="17" height="16" viewBox="0 0 17 16"><path d="M6.5 5.5 L10.5 9.5 L6 14 Q5 15 4 14 L1.3 11.3 Q0.5 10.3 1.5 9.5Z" fill="#f6f6f6" stroke="#9a9a9a" stroke-width="1.1"/><path d="M6.5 5.5 L10.5 1.5 Q11.5 0.5 12.5 1.5 L15.5 4.5 Q16.3 5.5 15.5 6.5 L10.5 9.5Z" fill="#f2a0b8" stroke="#d8849c" stroke-width="0.9"/><path d="M3 15.3h6" stroke="#b0b0b0" stroke-width="1"/></svg>
<svg style="left:998px;top:307px" width="14" height="16" viewBox="0 0 14 16"><path d="M6 9 L7.5 0.5 L8.5 1 L7.5 9.5Z" fill="#9ab8e0" stroke="#5a88c8" stroke-width="0.6"/><path d="M7.5 9 L12.5 2.5 L13.3 3.2 L9 9.8Z" fill="#c8dcf0" stroke="#5a88c8" stroke-width="0.6"/><circle cx="3.5" cy="11.5" r="2.6" fill="none" stroke="#3a7ac8" stroke-width="1.8"/><circle cx="8.5" cy="13" r="2.3" fill="none" stroke="#3a7ac8" stroke-width="1.8"/></svg>
<svg style="left:1025px;top:307px" width="16" height="16" viewBox="0 0 16 16"><path d="M1 15 L2.5 10.5 L12 1 Q13 0.5 14 1.5 L15 2.5 Q15.5 3.5 14.8 4.2 L5.5 13.5Z" fill="#f4d95a" stroke="#c88a2a" stroke-width="0.9"/><path d="M1 15 L2.5 10.5 L5.5 13.5Z" fill="#7a4a1a"/></svg>
<svg style="left:1044px;top:306px" width="17" height="17" viewBox="0 0 17 17"><circle cx="8.5" cy="8.5" r="8" fill="#4aa83a"/><circle cx="8.5" cy="8.5" r="6.6" fill="#8ad07a"/><circle cx="8.5" cy="8.5" r="5.8" fill="#5a9ad8"/><path d="M8 2.8 Q12 2.5 14 5.5 Q14.5 9 12.5 10 Q10 9.5 9.5 8 Q8 7 8 2.8Z" fill="#3ab84a"/><path d="M6 9 Q8 9 8.5 11 Q9 13.5 7 14 Q5.5 12 6 9Z" fill="#3a8ad0"/><path d="M4 5 Q6 3.5 7.5 4.5 Q6 6 6.5 7.5 Q5 8 4 7Z" fill="#7ac8e8"/></svg>
<svg style="left:1072px;top:307px" width="15" height="15" viewBox="0 0 15 15"><defs><radialGradient id="rcg" cx="0.5" cy="0.7" r="0.7"><stop offset="0" stop-color="#ff3a10"/><stop offset="1" stop-color="#f88870"/></radialGradient></defs><path d="M4.5 0.5h6l4 4v6l-4 4h-6l-4-4v-6z" fill="url(#rcg)" stroke="#f0a8a0" stroke-width="0.9"/></svg>
<svg style="left:1092px;top:307px" width="15" height="15" viewBox="0 0 15 15"><rect x="0.5" y="0.5" width="14" height="14" rx="1" fill="#d43a2a" stroke="#a42a1a"/><path d="M4 4 L11 11 M11 4 L4 11" stroke="#fff" stroke-width="2.3"/></svg>
<div style="left:789px;top:329px;width:1px;height:395px;background:#6a7680;"></div>
<div style="left:809px;top:329px;width:2px;height:368px;background:#8d9dab;"></div>
<svg style="left:792px;top:331px" width="15" height="14" viewBox="0 0 15 14"><path d="M7.5 8.5 L12 13" stroke="#c08040" stroke-width="2.4" stroke-linecap="round"/><circle cx="5.5" cy="6" r="4.8" fill="#d4e4f6" stroke="#6a94cc" stroke-width="1"/><path d="M9.5 1.5h2.5v2.5h2.5v2.5h-2.5v2.5h-2.5v-2.5h-2.5v-2.5h2.5z" fill="#5cb04a" stroke="#2f7a22" stroke-width="0.8"/></svg>
<svg style="left:792px;top:346px" width="15" height="14" viewBox="0 0 15 14"><path d="M7.5 8.5 L12 13" stroke="#c08040" stroke-width="2.4" stroke-linecap="round"/><circle cx="5.5" cy="6" r="4.8" fill="#d4e4f6" stroke="#6a94cc" stroke-width="1"/><rect x="7" y="4.5" width="7.5" height="3" fill="#ee2222" stroke="#fff" stroke-width="0.7"/></svg>
<svg style="left:792px;top:363px" width="16" height="14" viewBox="0 0 16 14"><path d="M1 7 L8 1 L15 7" fill="none" stroke="#b87a3a" stroke-width="2"/><path d="M3 7 L8 3 L13 7 V13 H3Z" fill="#f2f2f2" stroke="#999" stroke-width="0.7"/><rect x="6.5" y="9" width="3" height="4" fill="#777"/><path d="M1 13h4M11 13h4" stroke="#4aa83a" stroke-width="2"/></svg>
<svg style="left:793px;top:382px" width="15" height="8" viewBox="0 0 15 8"><path d="M1 4 L5 0.5 V2.7 H13.5 V5.3 H5 V7.5Z" fill="#86c872" stroke="#4f9a3c" stroke-width="0.8"/></svg>
<svg style="left:793px;top:398px" width="15" height="8" viewBox="0 0 15 8"><path d="M13.5 4 L9.5 0.5 V2.7 H1 V5.3 H9.5 V7.5Z" fill="#86c872" stroke="#4f9a3c" stroke-width="0.8"/></svg>
<svg style="left:796px;top:411px" width="8" height="14" viewBox="0 0 8 14"><path d="M4 0.5 L7.5 4.5 H5.3 V13.5 H2.7 V4.5 H0.5Z" fill="#86c872" stroke="#4f9a3c" stroke-width="0.8"/></svg>
<svg style="left:796px;top:427px" width="8" height="14" viewBox="0 0 8 14"><path d="M4 13.5 L7.5 9.5 H5.3 V0.5 H2.7 V9.5 H0.5Z" fill="#86c872" stroke="#4f9a3c" stroke-width="0.8"/></svg>
<svg style="left:793px;top:457px" width="14" height="15" viewBox="0 0 14 15"><path d="M6 2 H9 Q13 2 13 6 Q13 10 9 10 H4" fill="none" stroke="#c8c8c8" stroke-width="2.8"/><path d="M5.5 6 L0.5 10 L5.5 14Z" fill="#c8c8c8"/></svg>
<svg style="left:793px;top:473px" width="14" height="15" viewBox="0 0 14 15"><path d="M8 13 H5 Q1 13 1 9 Q1 5 5 5 H10" fill="none" stroke="#c8c8c8" stroke-width="2.8"/><path d="M8.5 1 L13.5 5 L8.5 9Z" fill="#c8c8c8"/></svg>
<div style="left:817.0px;top:357px;width:10.0px;height:1px;background:#2a2a2a"></div>
<div class="t" style="left:817px;top:346px;font-size:12.6px;line-height:12.6px;font-weight:bold;color:#2a2a2a;font-family:'Liberation Sans',sans-serif;transform:scaleX(1.1954);transform-origin:0 0;">View</div>
<div class="t" style="left:864px;top:346px;font-size:12.6px;line-height:12.6px;font-weight:bold;color:#2a2a2a;font-family:'Liberation Sans',sans-serif;transform:scaleX(1.1738);transform-origin:0 0;">Transects</div>
<div class="t" style="left:1120px;top:348px;font-size:12.6px;line-height:12.6px;font-weight:bold;color:#2a2a2a;font-family:'Liberation Sans',sans-serif;transform:scaleX(1.1882);transform-origin:0 0;">Transect 3</div>
<div style="left:1378px;top:342px;width:17px;height:18px;background:#eeeeee;border:1px solid #b4b4b4;"></div>
<svg style="left:1378px;top:342px" width="17" height="18"><path d="M8 3L2 8.5L8 14ZM15 3L9 8.5L15 14Z" fill="#7a84c0" stroke="#4a5490" stroke-width="0.6"/></svg>
<div style="left:1397px;top:342px;width:17px;height:18px;background:#eeeeee;border:1px solid #b4b4b4;"></div>
<svg style="left:1397px;top:342px" width="17" height="18"><path d="M10 3L4 8.5L10 14Z" fill="#7a84c0" stroke="#4a5490" stroke-width="0.6"/><rect x="11" y="4" width="2" height="9" fill="#7a84c0" stroke="#4a5490" stroke-width="0.5"/></svg>
<div style="left:1416px;top:342px;width:17px;height:18px;background:#eeeeee;border:1px solid #b4b4b4;"></div>
<svg style="left:1416px;top:342px" width="17" height="18"><path d="M6 3L12 8.5L6 14Z" fill="#7a84c0" stroke="#4a5490" stroke-width="0.6"/></svg>
<div style="left:1435px;top:342px;width:17px;height:18px;background:#eeeeee;border:1px solid #b4b4b4;"></div>
<svg style="left:1435px;top:342px" width="17" height="18"><rect x="3" y="4" width="2" height="9" fill="#7a84c0" stroke="#4a5490" stroke-width="0.5"/><path d="M7 3L13 8.5L7 14Z" fill="#7a84c0" stroke="#4a5490" stroke-width="0.6"/></svg>
<div style="left:811px;top:361px;width:631px;height:336px;background:#0000ff;"></div>
<div style="left:814px;top:364px;width:628px;height:330px;background:#000000;"></div>
<svg style="left:0;top:0" width="1442" height="1078"><rect x="887.5" y="438.5" width="532" height="181" fill="none" stroke="#fff" stroke-width="1.1"/><path d="M933.5 434V624.5" stroke="#fff" stroke-width="1.1"/><path d="M1006.5 438.5V624.5" stroke="#fff" stroke-width="1.1"/><path d="M1079.5 438.5V624.5" stroke="#fff" stroke-width="1.1"/><path d="M1152.5 438.5V624.5" stroke="#fff" stroke-width="1.1"/><path d="M1225.5 438.5V624.5" stroke="#fff" stroke-width="1.1"/><path d="M1298.5 438.5V624.5" stroke="#fff" stroke-width="1.1"/><path d="M1371.5 434V624.5" stroke="#fff" stroke-width="1.1"/><path d="M882 440.5H1419.5" stroke="#fff" stroke-width="1.1"/><path d="M882 484.5H1419.5" stroke="#fff" stroke-width="1.1"/><path d="M882 528.5H1419.5" stroke="#fff" stroke-width="1.1"/><path d="M882 572.5H1419.5" stroke="#fff" stroke-width="1.1"/><path d="M882 616.5H1419.5" stroke="#fff" stroke-width="1.1"/><rect x="1426" y="507" width="6" height="23" rx="2.5" fill="#fff"/><rect x="1434" y="507" width="6" height="23" rx="2.5" fill="#fff"/><g fill="#000"><rect x="1428" y="520" width="1" height="1"/><rect x="1430" y="520" width="1" height="1"/><rect x="1428" y="523" width="1" height="1"/><rect x="1436" y="513" width="2" height="1"/><rect x="1437" y="519" width="1" height="1"/><rect x="1436" y="524" width="2" height="2"/></g></svg>
<div class="t" style="left:1120px;top:411px;font-size:12.5px;line-height:12.5px;font-weight:normal;color:#ffffff;font-family:'Liberation Mono',monospace;transform:scaleX(1.0500);transform-origin:0 0;">Location</div>
<div class="t" style="left:864px;top:423px;font-size:12.5px;line-height:12.5px;font-weight:normal;color:#ffffff;font-family:'Liberation Mono',monospace;transform:scaleX(1.0588);transform-origin:0 0;">11.16N 86.32W (B)</div>
<div class="t" style="left:1304px;top:423px;font-size:12.5px;line-height:12.5px;font-weight:normal;color:#ffffff;font-family:'Liberation Mono',monospace;transform:scaleX(1.0588);transform-origin:0 0;">7.630N 82.15W (E)</div>
<div class="t" style="left:857px;top:435px;font-size:12.5px;line-height:12.5px;font-weight:normal;color:#ffffff;font-family:'Liberation Mono',monospace;transform:scaleX(0.9333);transform-origin:0 0;">100</div>
<div class="t" style="left:864px;top:480px;font-size:12.5px;line-height:12.5px;font-weight:normal;color:#ffffff;font-family:'Liberation Mono',monospace;transform:scaleX(0.9333);transform-origin:0 0;">50</div>
<div class="t" style="left:872px;top:524px;font-size:12.5px;line-height:12.5px;font-weight:normal;color:#ffffff;font-family:'Liberation Mono',monospace;transform:scaleX(0.8000);transform-origin:0 0;">0</div>
<div class="t" style="left:855px;top:568px;font-size:12.5px;line-height:12.5px;font-weight:normal;color:#ffffff;font-family:'Liberation Mono',monospace;transform:scaleX(1.0222);transform-origin:0 0;">-50</div>
<div class="t" style="left:848px;top:613px;font-size:12.5px;line-height:12.5px;font-weight:normal;color:#ffffff;font-family:'Liberation Mono',monospace;">-100</div>
<div class="t" style="left:929px;top:628px;font-size:12.5px;line-height:12.5px;font-weight:normal;color:#ffffff;font-family:'Liberation Mono',monospace;transform:scaleX(0.8000);transform-origin:0 0;">0</div>
<div class="t" style="left:995px;top:628px;font-size:12.5px;line-height:12.5px;font-weight:normal;color:#ffffff;font-family:'Liberation Mono',monospace;transform:scaleX(0.9778);transform-origin:0 0;">100</div>
<div class="t" style="left:1068px;top:628px;font-size:12.5px;line-height:12.5px;font-weight:normal;color:#ffffff;font-family:'Liberation Mono',monospace;transform:scaleX(0.9778);transform-origin:0 0;">200</div>
<div class="t" style="left:1141px;top:628px;font-size:12.5px;line-height:12.5px;font-weight:normal;color:#ffffff;font-family:'Liberation Mono',monospace;transform:scaleX(0.9778);transform-origin:0 0;">300</div>
<div class="t" style="left:1213px;top:628px;font-size:12.5px;line-height:12.5px;font-weight:normal;color:#ffffff;font-family:'Liberation Mono',monospace;transform:scaleX(0.9778);transform-origin:0 0;">400</div>
<div class="t" style="left:1286px;top:628px;font-size:12.5px;line-height:12.5px;font-weight:normal;color:#ffffff;font-family:'Liberation Mono',monospace;transform:scaleX(0.9778);transform-origin:0 0;">500</div>
<div class="t" style="left:1359px;top:628px;font-size:12.5px;line-height:12.5px;font-weight:normal;color:#ffffff;font-family:'Liberation Mono',monospace;transform:scaleX(0.9778);transform-origin:0 0;">600</div>
<div class="t" style="left:1100px;top:642px;font-size:12.5px;line-height:12.5px;font-weight:normal;color:#ffffff;font-family:'Liberation Mono',monospace;transform:scaleX(1.0462);transform-origin:0 0;">Distance (km)</div>
<div class="t" style="left:827px;top:583px;width:104px;height:11px;transform:rotate(-90deg);transform-origin:0 0;font:12.5px/11px 'Liberation Mono',monospace;color:#fff;"><span style="display:inline-block;transform:scaleX(1.07);transform-origin:0 0">Altitude (km)</span></div>
<div style="left:792px;top:701px;width:106px;height:17px;background:#eeeeee;border:1px solid #7a7a7a;border-right-color:#fff;border-bottom-color:#fff;"></div>
<div style="left:900px;top:701px;width:498px;height:17px;background:#eeeeee;border:1px solid #7a7a7a;border-right-color:#fff;border-bottom-color:#fff;"></div>
<div style="left:1398px;top:701px;width:50px;height:17px;background:#eeeeee;border:1px solid #7a7a7a;border-right-color:#fff;border-bottom-color:#fff;"></div>
<div class="t" style="left:803px;top:703px;font-size:13px;line-height:13px;font-weight:normal;color:#222;font-family:'Liberation Sans',sans-serif;transform:scaleX(1.0949);transform-origin:0 0;-webkit-text-stroke:0.5px #222;">16:29:57 GMT</div>
<div class="t" style="left:902.8px;top:703px;font-size:13px;line-height:13px;font-weight:normal;color:#222;font-family:'Liberation Sans',sans-serif;transform:scaleX(1.2808);transform-origin:0 0;-webkit-text-stroke:0.5px #222;">Latitude:</div>
<div class="t" style="left:975.7px;top:703px;font-size:13px;line-height:13px;font-weight:normal;color:#222;font-family:'Liberation Sans',sans-serif;transform:scaleX(1.1749);transform-origin:0 0;-webkit-text-stroke:0.5px #222;">11.543</div>
<div class="t" style="left:1024.7px;top:703px;font-size:13px;line-height:13px;font-weight:normal;color:#222;font-family:'Liberation Sans',sans-serif;transform:scaleX(1.2494);transform-origin:0 0;-webkit-text-stroke:0.5px #222;">Longitude:</div>
<div class="t" style="left:1105.8px;top:703px;font-size:13px;line-height:13px;font-weight:normal;color:#222;font-family:'Liberation Sans',sans-serif;transform:scaleX(1.1245);transform-origin:0 0;-webkit-text-stroke:0.5px #222;">-86.771</div>
<div class="t" style="left:1159.6px;top:703px;font-size:13px;line-height:13px;font-weight:normal;color:#222;font-family:'Liberation Sans',sans-serif;transform:scaleX(1.2813);transform-origin:0 0;-webkit-text-stroke:0.5px #222;">Altitude:</div>
<div class="t" style="left:1224.7px;top:703px;font-size:13px;line-height:13px;font-weight:normal;color:#222;font-family:'Liberation Sans',sans-serif;transform:scaleX(1.1422);transform-origin:0 0;-webkit-text-stroke:0.5px #222;">177.253</div>
<div class="t" style="left:1283.0px;top:703px;font-size:13px;line-height:13px;font-weight:normal;color:#222;font-family:'Liberation Sans',sans-serif;transform:scaleX(1.0619);transform-origin:0 0;-webkit-text-stroke:0.5px #222;">km</div>
<div style="left:3px;top:726px;width:965px;height:352px;background:#eeeeee;border-radius:6px 6px 0 0;"></div>
<div style="left:3px;top:726px;width:965px;height:27px;background:linear-gradient(#8f8c84,#c9c5b9 3px,#f0ece0 6px,#ebe4d0 50%,#e2d9bf);border-radius:6px 6px 0 0;"></div>
<div style="left:3px;top:726px;width:535px;height:27px;background:linear-gradient(#86837b,#aeaba1 3px,#c2beb2 30%,#d2ccba 70%,#ddd5bf);border-radius:6px 0 0 0;"></div>
<div style="left:537px;top:726px;width:51px;height:27px;background:linear-gradient(#8a877f,#bdb9ae 3px,#cbc6b8 50%,#d6cfbb);"></div>
<div style="left:13px;top:731px;width:58px;height:18px;background:linear-gradient(#cbc4b2,#d8d0bd);border-radius:9px;"></div>
<div style="left:14px;top:732px;width:16px;height:16px;background:radial-gradient(circle at 50% 40%,#e2e0dc,#cfcdc8);border-radius:50%;border:1px solid #b9b5ac;"></div>
<div style="left:34px;top:732px;width:16px;height:16px;background:radial-gradient(circle at 50% 40%,#e2e0dc,#cfcdc8);border-radius:50%;border:1px solid #b9b5ac;"></div>
<div style="left:54px;top:732px;width:16px;height:16px;background:radial-gradient(circle at 50% 40%,#e2e0dc,#cfcdc8);border-radius:50%;border:1px solid #b9b5ac;"></div>
<svg style="left:14px;top:732px" width="60" height="16"><path d="M5 5L11 11M11 5L5 11" stroke="#9a9a9a" stroke-width="1.1"/><path d="M25 6.5L28 9.5L31 6.5" fill="none" stroke="#9a9a9a" stroke-width="1.1"/><path d="M45 9.5L48 6.5L51 9.5" fill="none" stroke="#9a9a9a" stroke-width="1.1"/></svg>
<div class="t" style="left:85px;top:733px;font-size:14.5px;line-height:14.5px;font-weight:bold;color:#676767;font-family:'Liberation Sans',sans-serif;transform:scaleX(1.0563);transform-origin:0 0;">Dashboard</div>
<div class="t" style="left:786px;top:729px;font-size:12.5px;line-height:12.5px;font-weight:normal;color:#cbc3ae;font-family:'Liberation Sans',sans-serif;transform:scaleX(0.9891);transform-origin:0 0;-webkit-text-stroke:0.25px #cbc3ae;">window.</div>
<div style="left:3px;top:753px;width:965px;height:20px;background:linear-gradient(#fdfdfd,#f4f4f4 40%,#e2e2e2);"></div>
<div style="left:3px;top:773px;width:965px;height:1px;background:#c6c6c6;"></div>
<div style="left:9.0px;top:768px;width:9.1px;height:1px;background:#2a2a2a"></div>
<div class="t" style="left:9px;top:757px;font-size:12.6px;line-height:12.6px;font-weight:bold;color:#2a2a2a;font-family:'Liberation Sans',sans-serif;transform:scaleX(1.1888);transform-origin:0 0;">File</div>
<div style="left:46.0px;top:768px;width:9.9px;height:1px;background:#2a2a2a"></div>
<div class="t" style="left:46px;top:757px;font-size:12.6px;line-height:12.6px;font-weight:bold;color:#2a2a2a;font-family:'Liberation Sans',sans-serif;transform:scaleX(1.1754);transform-origin:0 0;">Edit</div>
<div style="left:85.0px;top:768px;width:10.4px;height:1px;background:#2a2a2a"></div>
<div class="t" style="left:85px;top:757px;font-size:12.6px;line-height:12.6px;font-weight:bold;color:#2a2a2a;font-family:'Liberation Sans',sans-serif;transform:scaleX(1.1473);transform-origin:0 0;">Displays</div>
<div style="left:169.2px;top:768px;width:8.6px;height:1px;background:#2a2a2a"></div>
<div class="t" style="left:158px;top:757px;font-size:12.6px;line-height:12.6px;font-weight:bold;color:#2a2a2a;font-family:'Liberation Sans',sans-serif;transform:scaleX(1.2268);transform-origin:0 0;">Data</div>
<div style="left:205.0px;top:768px;width:8.5px;height:1px;background:#2a2a2a"></div>
<div class="t" style="left:205px;top:757px;font-size:12.6px;line-height:12.6px;font-weight:bold;color:#2a2a2a;font-family:'Liberation Sans',sans-serif;transform:scaleX(1.1049);transform-origin:0 0;">Tools</div>
<div style="left:256.0px;top:768px;width:10.8px;height:1px;background:#2a2a2a"></div>
<div class="t" style="left:256px;top:757px;font-size:12.6px;line-height:12.6px;font-weight:bold;color:#2a2a2a;font-family:'Liberation Sans',sans-serif;transform:scaleX(1.1884);transform-origin:0 0;">Help</div>
<svg style="left:9px;top:779px" width="17" height="16" viewBox="0 0 17 16"><path d="M3 1 L7 6" stroke="#777" stroke-width="1" fill="none"/><path d="M4 6 Q8 4 12 5 Q16 7 16.5 12 Q16 14 14 13 L11 11 Q8 11 6 12 L4 15 Q1 15 1 11 Q1 7 4 6Z" fill="#e8e8e8" stroke="#999" stroke-width="0.9"/><path d="M3.5 9.5 h3 M5 8 v3" stroke="#3a3" stroke-width="1.2"/><circle cx="9" cy="8" r="1" fill="#48f"/><circle cx="11" cy="7" r="1" fill="#e33"/></svg>
<svg style="left:30px;top:779px" width="17" height="16" viewBox="0 0 17 16"><rect x="0.5" y="1.5" width="14" height="12" fill="#f4f7fc" stroke="#5a84c8"/><rect x="1" y="2" width="13" height="2" fill="#8fb0e0"/><circle cx="13" cy="13" r="3.3" fill="#3c9a2c" stroke="#2a7a20" stroke-width="0.6"/><path d="M11 13h4M13 11v4" stroke="#fff" stroke-width="1.3"/></svg>
<svg style="left:57px;top:779px" width="16" height="16" viewBox="0 0 16 16"><path d="M1 3.5h5l1.5 1.5h7.5v9h-14z" fill="#f7d26a" stroke="#d9962a" stroke-width="1"/><path d="M1.5 7h13.5" stroke="#fbe9a8" stroke-width="1.2"/></svg>
<svg style="left:76px;top:778px" width="17" height="17" viewBox="0 0 17 17"><path d="M0.5 0.5h14l2 2v14h-16z" fill="#5d8fd6" stroke="#3a68b8"/><rect x="3" y="1" width="10" height="6" fill="#e8eef8"/><rect x="4.5" y="2" width="1.5" height="3" fill="#3a68b8"/><rect x="2.5" y="10" width="12" height="5" fill="#dfe8f4"/><path d="M4 12h9M4 14h9" stroke="#6cbf4a" stroke-width="1"/></svg>
<svg style="left:97px;top:779px" width="16" height="16" viewBox="0 0 16 16"><rect x="0.5" y="0.5" width="10" height="9" fill="#e8eef8" stroke="#5a84c8"/><rect x="2.5" y="2.5" width="10" height="9" fill="#e8eef8" stroke="#5a84c8"/><path d="M4.5 4.5h9l1.5 1.5v9.5h-10.5z" fill="#5d8fd6" stroke="#3a68b8"/><rect x="6.5" y="5" width="6" height="3.5" fill="#e8eef8"/><rect x="6" y="11" width="8" height="3.5" fill="#dfe8f4"/><path d="M7 13h6" stroke="#6cbf4a"/></svg>
<svg style="left:117px;top:779px" width="17" height="16" viewBox="0 0 17 16"><path d="M8.5 0.5 L10.8 5.6 L16.3 6 L12.1 9.6 L13.4 15.2 L8.5 12.3 L3.6 15.2 L4.9 9.6 L0.7 6 L6.2 5.6Z" fill="#f2c21b" stroke="#d6951a" stroke-width="0.8"/></svg>
<svg style="left:145px;top:779px" width="16" height="16" viewBox="0 0 16 16"><circle cx="7.5" cy="7.5" r="7" fill="#dfe8f5" stroke="#6a8fc8"/><circle cx="7.5" cy="7.5" r="5.3" fill="#5d88c8"/><path d="M5.5 5.8 Q5.7 3.8 7.6 3.8 Q9.6 3.9 9.6 5.6 Q9.5 7 7.7 7.6 V8.8" stroke="#fff" stroke-width="1.6" fill="none"/><circle cx="7.7" cy="10.8" r="0.9" fill="#fff"/></svg>
<svg style="left:164px;top:779px" width="17" height="16" viewBox="0 0 17 16"><rect x="0.5" y="1.5" width="15" height="10" fill="#e8eefa" stroke="#5a84c8"/><path d="M1 2 L8 7.5 L15 2" stroke="#8aa8dc" fill="none"/><path d="M6 9.5h4v-2.5l5 4l-5 4v-2.5h-4z" fill="#56a63a" stroke="#2f7d22" stroke-width="0.7"/></svg>
<svg style="left:191px;top:779px" width="17" height="16" viewBox="0 0 17 16"><path d="M6.5 5.5 L10.5 9.5 L6 14 Q5 15 4 14 L1.3 11.3 Q0.5 10.3 1.5 9.5Z" fill="#f6f6f6" stroke="#9a9a9a" stroke-width="1.1"/><path d="M6.5 5.5 L10.5 1.5 Q11.5 0.5 12.5 1.5 L15.5 4.5 Q16.3 5.5 15.5 6.5 L10.5 9.5Z" fill="#f2a0b8" stroke="#d8849c" stroke-width="0.9"/><path d="M3 15.3h6" stroke="#b0b0b0" stroke-width="1"/></svg>
<svg style="left:212px;top:779px" width="14" height="16" viewBox="0 0 14 16"><path d="M6 9 L7.5 0.5 L8.5 1 L7.5 9.5Z" fill="#9ab8e0" stroke="#5a88c8" stroke-width="0.6"/><path d="M7.5 9 L12.5 2.5 L13.3 3.2 L9 9.8Z" fill="#c8dcf0" stroke="#5a88c8" stroke-width="0.6"/><circle cx="3.5" cy="11.5" r="2.6" fill="none" stroke="#3a7ac8" stroke-width="1.8"/><circle cx="8.5" cy="13" r="2.3" fill="none" stroke="#3a7ac8" stroke-width="1.8"/></svg>
<svg style="left:239px;top:779px" width="16" height="16" viewBox="0 0 16 16"><path d="M1 15 L2.5 10.5 L12 1 Q13 0.5 14 1.5 L15 2.5 Q15.5 3.5 14.8 4.2 L5.5 13.5Z" fill="#f4d95a" stroke="#c88a2a" stroke-width="0.9"/><path d="M1 15 L2.5 10.5 L5.5 13.5Z" fill="#7a4a1a"/></svg>
<svg style="left:258px;top:778px" width="17" height="17" viewBox="0 0 17 17"><circle cx="8.5" cy="8.5" r="8" fill="#4aa83a"/><circle cx="8.5" cy="8.5" r="6.6" fill="#8ad07a"/><circle cx="8.5" cy="8.5" r="5.8" fill="#5a9ad8"/><path d="M8 2.8 Q12 2.5 14 5.5 Q14.5 9 12.5 10 Q10 9.5 9.5 8 Q8 7 8 2.8Z" fill="#3ab84a"/><path d="M6 9 Q8 9 8.5 11 Q9 13.5 7 14 Q5.5 12 6 9Z" fill="#3a8ad0"/><path d="M4 5 Q6 3.5 7.5 4.5 Q6 6 6.5 7.5 Q5 8 4 7Z" fill="#7ac8e8"/></svg>
<svg style="left:286px;top:779px" width="15" height="15" viewBox="0 0 15 15"><defs><radialGradient id="rcg" cx="0.5" cy="0.7" r="0.7"><stop offset="0" stop-color="#ff3a10"/><stop offset="1" stop-color="#f88870"/></radialGradient></defs><path d="M4.5 0.5h6l4 4v6l-4 4h-6l-4-4v-6z" fill="url(#rcg)" stroke="#f0a8a0" stroke-width="0.9"/></svg>
<svg style="left:306px;top:779px" width="15" height="15" viewBox="0 0 15 15"><rect x="0.5" y="0.5" width="14" height="14" rx="1" fill="#d43a2a" stroke="#a42a1a"/><path d="M4 4 L11 11 M11 4 L4 11" stroke="#fff" stroke-width="2.3"/></svg>
<div style="left:4px;top:828px;width:964px;height:2px;background:#7f9fc8;"></div>
<div style="left:4px;top:830px;width:964px;height:3px;background:#c8dcf0;"></div>
<svg style="left:5px;top:802px" width="122" height="28"><path d="M0.5 28 V6 L6 0.5 H120.5 V28" fill="#eeeeee" stroke="#6f8cb0" stroke-width="1"/></svg>
<svg style="left:126px;top:802px" width="155" height="28"><path d="M0.5 28 V6 L6 0.5 H153.5 V28" fill="#eeeeee" stroke="#6f8cb0" stroke-width="1"/></svg>
<svg style="left:280px;top:802px" width="148" height="28"><path d="M0.5 28 V6 L6 0.5 H146.5 V28" fill="#eeeeee" stroke="#6f8cb0" stroke-width="1"/></svg>
<svg style="left:427px;top:801px" width="108" height="32"><path d="M0.5 32 V6 L6 0.5 H106.5 V32" fill="#c8dcf0" stroke="#6f8cb0" stroke-width="1"/></svg>
<div class="t" style="left:45px;top:810px;font-size:12.6px;line-height:12.6px;font-weight:bold;color:#2a2a2a;font-family:'Liberation Sans',sans-serif;transform:scaleX(1.0994);transform-origin:0 0;">Quicklinks</div>
<div class="t" style="left:164px;top:810px;font-size:12.6px;line-height:12.6px;font-weight:bold;color:#2a2a2a;font-family:'Liberation Sans',sans-serif;transform:scaleX(1.1706);transform-origin:0 0;">Data Choosers</div>
<div class="t" style="left:318px;top:810px;font-size:12.6px;line-height:12.6px;font-weight:bold;color:#2a2a2a;font-family:'Liberation Sans',sans-serif;transform:scaleX(1.1749);transform-origin:0 0;">Field Selector</div>
<div class="t" style="left:463px;top:810px;font-size:12.6px;line-height:12.6px;font-weight:bold;color:#2a2a2a;font-family:'Liberation Sans',sans-serif;transform:scaleX(1.1394);transform-origin:0 0;">Displays</div>
<svg style="left:17px;top:804px" width="21" height="21"><path d="M1 5 L7 5 L6 0.5 L19 13 L15 19.5 L1 19.5 L7 14Z" fill="#c8e0c8" stroke="#222" stroke-width="1"/><path d="M7 14 L15 19.5" stroke="#222" stroke-width="0.8"/></svg>
<svg style="left:136px;top:803px" width="23" height="22"><circle cx="15" cy="8" r="7.5" fill="#2a9a3a"/><path d="M11 3 Q15 1 19 4 Q17 8 20 11 Q16 12 14 9 Q12 6 11 3Z" fill="#6aa8e8"/><path d="M3 12 h6 v4 h3 v-4 h4 l2 7 h-16z" fill="#222"/><circle cx="5" cy="18" r="3.5" fill="#b8b8f0" stroke="#111" stroke-width="1.5"/><circle cx="14" cy="18" r="3.5" fill="#b8b8f0" stroke="#111" stroke-width="1.5"/></svg>
<svg style="left:294px;top:804px" width="16" height="22"><rect x="1" y="4" width="13" height="17" rx="1.5" fill="#d6c7ad" stroke="#333"/><path d="M5 4 V2 Q7.5 0 10 2 V4 Z" fill="#ddd" stroke="#555"/><path d="M3 8h9M3 11h9M3 14h9M3 17h9" stroke="#bfae92" stroke-dasharray="1 1"/></svg>
<svg style="left:435px;top:805px" width="24" height="21"><rect x="2.5" y="0.5" width="19" height="15" fill="#222"/><rect x="4" y="2" width="16" height="12" fill="#3a9a6a"/><rect x="5" y="3" width="9" height="5" fill="#9ad0b0"/><rect x="0.5" y="16" width="23" height="4.5" fill="#c8c0e8" stroke="#222"/></svg>
<div style="left:3px;top:829px;width:1px;height:249px;background:#6f8cb0;"></div>
<div style="left:4px;top:829px;width:2px;height:249px;background:#dce8f4;"></div>
<div style="left:6px;top:833px;width:152px;height:245px;background:#eeeeee;border-left:1px solid #999;border-right:1px solid #999;border-top:1px solid #999;"></div>
<svg style="left:8px;top:846px" width="9" height="9" viewBox="0 0 9 9"><rect x="0.5" y="0.5" width="8" height="8" fill="#ffffcc" stroke="#000"/><path d="M2 4.5h5" stroke="#000"/></svg>
<svg style="left:19px;top:838px" width="25" height="25"><circle cx="12" cy="12" r="9" fill="none" stroke="#3a6ad0" stroke-width="3"/><path d="M12 0.5V24M0.5 12H24" stroke="#333" stroke-width="1"/><rect x="8.5" y="8.5" width="7" height="7" fill="none" stroke="#333"/></svg>
<div class="t" style="left:43px;top:846px;font-size:12.6px;line-height:12.6px;font-weight:bold;color:#2a2a2a;font-family:'Liberation Sans',sans-serif;transform:scaleX(1.1548);transform-origin:0 0;">View 1</div>
<div style="left:7px;top:862px;width:150px;height:3px;background:#111;"></div>
<div class="t" style="left:18px;top:870px;font-size:11.5px;line-height:11.5px;font-weight:normal;color:#111;font-family:'Liberation Sans',sans-serif;transform:scaleX(1.0787);transform-origin:0 0;-webkit-text-stroke:0.25px #111;">Default Background Ma.</div>
<div style="left:17px;top:882px;width:140px;height:1px;background:#9a9a9a;"></div>
<div class="t" style="left:18px;top:888px;font-size:11.5px;line-height:11.5px;font-weight:normal;color:#111;font-family:'Liberation Sans',sans-serif;transform:scaleX(1.0927);transform-origin:0 0;-webkit-text-stroke:0.25px #111;">Transect Drawing Con.</div>
<div style="left:17px;top:900px;width:140px;height:1px;background:#9a9a9a;"></div>
<div style="left:17px;top:901px;width:140px;height:17px;background:#d9d9d9;"></div>
<div class="t" style="left:18px;top:906px;font-size:11.5px;line-height:11.5px;font-weight:normal;color:#111;font-family:'Liberation Sans',sans-serif;transform:scaleX(1.0891);transform-origin:0 0;-webkit-text-stroke:0.25px #111;">Text Point Data - Point.</div>
<svg style="left:150px;top:905px" width="6" height="10"><path d="M0 0L5.5 5L0 10Z" fill="#1a3a7a"/></svg>
<div style="left:17px;top:917px;width:140px;height:1px;background:#9a9a9a;"></div>
<svg style="left:8px;top:928px" width="9" height="9" viewBox="0 0 9 9"><rect x="0.5" y="0.5" width="8" height="8" fill="#ffffcc" stroke="#000"/><path d="M2 4.5h5" stroke="#000"/></svg>
<svg style="left:21px;top:925px" width="18" height="14"><rect x="0.5" y="0.5" width="16" height="12.5" fill="none" stroke="#3a3a7a"/><path d="M0.5 4.5H17M0.5 8.5H17M4.5 0.5V13M8.5 0.5V13M12.5 0.5V13" stroke="#3a3a7a"/></svg>
<div class="t" style="left:41px;top:927px;font-size:12.6px;line-height:12.6px;font-weight:bold;color:#2a2a2a;font-family:'Liberation Sans',sans-serif;transform:scaleX(1.1804);transform-origin:0 0;">View 2</div>
<div style="left:7px;top:940px;width:150px;height:3px;background:#0000e0;"></div>
<div class="t" style="left:18px;top:945px;font-size:11.5px;line-height:11.5px;font-weight:normal;color:#3a2a40;font-family:'Liberation Sans',sans-serif;transform:scaleX(1.0593);transform-origin:0 0;-webkit-text-stroke:0.25px #3a2a40;">No Displays</div>
<div style="left:7px;top:957px;width:150px;height:1px;background:#9a9a9a;"></div>
<div style="left:160px;top:833px;width:805px;height:21px;background:linear-gradient(#fdfdfd,#f4f4f4 40%,#e2e2e2);"></div>
<div style="left:160px;top:854px;width:805px;height:1px;background:#c6c6c6;"></div>
<div style="left:166.0px;top:849px;width:9.1px;height:1px;background:#2a2a2a"></div>
<div class="t" style="left:166px;top:838px;font-size:12.6px;line-height:12.6px;font-weight:bold;color:#2a2a2a;font-family:'Liberation Sans',sans-serif;transform:scaleX(1.1888);transform-origin:0 0;">File</div>
<div style="left:203.0px;top:849px;width:9.9px;height:1px;background:#2a2a2a"></div>
<div class="t" style="left:203px;top:838px;font-size:12.6px;line-height:12.6px;font-weight:bold;color:#2a2a2a;font-family:'Liberation Sans',sans-serif;transform:scaleX(1.1754);transform-origin:0 0;">Edit</div>
<div style="left:242.0px;top:849px;width:10.0px;height:1px;background:#2a2a2a"></div>
<div class="t" style="left:242px;top:838px;font-size:12.6px;line-height:12.6px;font-weight:bold;color:#2a2a2a;font-family:'Liberation Sans',sans-serif;transform:scaleX(1.1954);transform-origin:0 0;">View</div>
<div style="left:290.0px;top:849px;width:10.8px;height:1px;background:#2a2a2a"></div>
<div class="t" style="left:290px;top:838px;font-size:12.6px;line-height:12.6px;font-weight:bold;color:#2a2a2a;font-family:'Liberation Sans',sans-serif;transform:scaleX(1.1884);transform-origin:0 0;">Help</div>
<div style="left:164px;top:878px;width:798px;height:200px;background:#eeeeee;border:1px solid #7f9fc8;border-bottom:none;"></div>
<div style="left:165px;top:879px;width:796px;height:2px;background:#c8dcf0;"></div>
<svg style="left:165px;top:861px" width="71" height="20"><path d="M0.5 20 V6 L6 0.5 H69.5 V20" fill="#c8dcf0" stroke="#6f8cb0" stroke-width="1"/></svg>
<svg style="left:235px;top:861px" width="63" height="18"><path d="M0.5 18 V6 L6 0.5 H61.5 V18" fill="#eeeeee" stroke="#6f8cb0" stroke-width="1"/></svg>
<svg style="left:297px;top:861px" width="50" height="18"><path d="M0.5 18 V6 L6 0.5 H48.5 V18" fill="#eeeeee" stroke="#6f8cb0" stroke-width="1"/></svg>
<svg style="left:346px;top:861px" width="66" height="18"><path d="M0.5 18 V6 L6 0.5 H64.5 V18" fill="#eeeeee" stroke="#6f8cb0" stroke-width="1"/></svg>
<div class="t" style="left:177px;top:864px;font-size:12.6px;line-height:12.6px;font-weight:bold;color:#2a2a2a;font-family:'Liberation Sans',sans-serif;transform:scaleX(1.1394);transform-origin:0 0;">Layout</div>
<div class="t" style="left:247px;top:864px;font-size:12.6px;line-height:12.6px;font-weight:bold;color:#2a2a2a;font-family:'Liberation Sans',sans-serif;transform:scaleX(1.0787);transform-origin:0 0;">Times</div>
<div class="t" style="left:307px;top:864px;font-size:12.6px;line-height:12.6px;font-weight:bold;color:#2a2a2a;font-family:'Liberation Sans',sans-serif;transform:scaleX(1.1353);transform-origin:0 0;">Plot</div>
<div class="t" style="left:357px;top:864px;font-size:12.6px;line-height:12.6px;font-weight:bold;color:#2a2a2a;font-family:'Liberation Sans',sans-serif;transform:scaleX(1.1646);transform-origin:0 0;">Filters</div>
<div class="t" style="left:227px;top:891px;font-size:12.6px;line-height:12.6px;font-weight:bold;color:#2a2a2a;font-family:'Liberation Sans',sans-serif;transform:scaleX(1.1915);transform-origin:0 0;">Declutter:</div>
<div style="left:318px;top:890px;width:13px;height:13px;background:linear-gradient(#fff,#dde6f0);border:1px solid #8a9cb0;"></div>
<svg style="left:336px;top:888px" width="15" height="16" viewBox="0 0 15 16"><path d="M3 7 V4 Q3 1 6 1 Q8.5 1 8.5 3" fill="none" stroke="#999" stroke-width="1.8"/><rect x="0.8" y="7" width="13" height="8.2" fill="#f7d35a" stroke="#d8902a"/><path d="M3 10h3M8.5 10h3M3 12.5h3M8.5 12.5h3" stroke="#c8902a"/><rect x="6.5" y="9.5" width="1.5" height="3" fill="#8a5a1a"/></svg>
<div class="t" style="left:366px;top:891px;font-size:12.6px;line-height:12.6px;font-weight:bold;color:#9a9a9a;font-family:'Liberation Sans',sans-serif;transform:scaleX(1.1490);transform-origin:0 0;">Density: Low</div>
<div style="left:468px;top:894px;width:95px;height:5px;background:#e8eef6;border:1px solid #b8c8dc;border-radius:2px;"></div>
<svg style="left:469px;top:889px" width="18" height="15"><path d="M0.5 0.5H17.5V8L9 14.5L0.5 8Z" fill="#f2f2f2" stroke="#8a8a8a"/></svg>
<div class="t" style="left:575px;top:891px;font-size:12.6px;line-height:12.6px;font-weight:bold;color:#9a9a9a;font-family:'Liberation Sans',sans-serif;transform:scaleX(1.1441);transform-origin:0 0;">High</div>
<div class="t" style="left:197px;top:922px;font-size:12.6px;line-height:12.6px;font-weight:bold;color:#2a2a2a;font-family:'Liberation Sans',sans-serif;transform:scaleX(1.1724);transform-origin:0 0;">Layout Model:</div>
<div class="t" style="left:315px;top:922px;font-size:12.6px;line-height:12.6px;font-weight:bold;color:#2a2a2a;font-family:'Liberation Sans',sans-serif;transform:scaleX(1.1442);transform-origin:0 0;">Location</div>
<svg style="left:379px;top:923px" width="9" height="9"><path d="M1 1L4.5 4L8 1M1 5L4.5 8L8 5" fill="none" stroke="#2a4a9a" stroke-width="1.5"/></svg>
<div class="t" style="left:410px;top:922px;font-size:12.6px;line-height:12.6px;font-weight:bold;color:#2a2a2a;font-family:'Liberation Sans',sans-serif;transform:scaleX(1.1323);transform-origin:0 0;">Scale:</div>
<div style="left:457px;top:918px;width:58px;height:19px;background:#fff;border:1px solid #7a8a9a;border-top-color:#333;border-left-color:#333;"></div>
<div class="t" style="left:460px;top:921px;font-size:13px;line-height:13px;font-weight:normal;color:#333;font-family:'Liberation Sans',sans-serif;transform:scaleX(0.8294);transform-origin:0 0;-webkit-text-stroke:0.25px #333;">1</div>
<div style="left:520px;top:915px;width:73px;height:25px;background:linear-gradient(#fafcff,#d8e4f2);border:1px solid #7f9fc8;border-radius:2px;"></div>
<div class="t" style="left:537px;top:922px;font-size:12.6px;line-height:12.6px;font-weight:bold;color:#2a2a2a;font-family:'Liberation Sans',sans-serif;transform:scaleX(1.0867);transform-origin:0 0;">Apply</div>
<div class="t" style="left:214px;top:953px;font-size:12.6px;line-height:12.6px;font-weight:bold;color:#2a2a2a;font-family:'Liberation Sans',sans-serif;transform:scaleX(1.1549);transform-origin:0 0;">Line Width:</div>
<div style="left:314px;top:949px;width:37px;height:19px;background:#fff;border:1px solid #7a8a9a;border-top-color:#333;border-left-color:#333;"></div>
<div class="t" style="left:317px;top:952px;font-size:13px;line-height:13px;font-weight:normal;color:#333;font-family:'Liberation Sans',sans-serif;transform:scaleX(1.2169);transform-origin:0 0;-webkit-text-stroke:0.25px #333;">3.0</div>
<svg style="left:360px;top:954px" width="18" height="10"><rect x="0.5" y="3" width="17" height="4" fill="#eee" stroke="#222"/><rect x="6" y="0.5" width="5" height="9" fill="#5a5a9a"/></svg>
<div class="t" style="left:174px;top:995px;font-size:12.6px;line-height:12.6px;font-weight:bold;color:#2a2a2a;font-family:'Liberation Sans',sans-serif;transform:scaleX(1.1649);transform-origin:0 0;">Vertical Position:</div>
<svg style="left:318px;top:983px" width="13" height="12"><circle cx="6" cy="6" r="5.5" fill="#f4f6f8" stroke="#666"/><circle cx="6" cy="6" r="3" fill="#222"/></svg>
<div class="t" style="left:335px;top:983px;font-size:12.6px;line-height:12.6px;font-weight:bold;color:#2a2a2a;font-family:'Liberation Sans',sans-serif;transform:scaleX(1.1861);transform-origin:0 0;">Altitude (if available)</div>
<svg style="left:489px;top:983px" width="14" height="12"><circle cx="6.5" cy="6" r="5.5" fill="#f4f6f8" stroke="#888"/></svg>
<div class="t" style="left:507px;top:983px;font-size:12.6px;line-height:12.6px;font-weight:bold;color:#2a2a2a;font-family:'Liberation Sans',sans-serif;transform:scaleX(1.1508);transform-origin:0 0;">Fixed position:</div>
<div style="left:315px;top:1006px;width:216px;height:6px;background:#e8eef6;border:1px solid #b8c8dc;border-radius:2px;"></div>
<svg style="left:314px;top:1000px" width="16" height="17"><path d="M0.5 0.5H15.5V9L8 16.5L0.5 9Z" fill="#f2f2f2" stroke="#8a8a8a"/></svg>
<div style="left:539px;top:1001px;width:59px;height:18px;background:#eeeeee;border:1px solid #b8c8dc;"></div>
<div class="t" style="left:541px;top:1005px;font-size:12px;line-height:12px;font-weight:normal;color:#b0b8c8;font-family:'Liberation Sans',sans-serif;transform:scaleX(0.9370);transform-origin:0 0;-webkit-text-stroke:0.25px #b0b8c8;">-1</div>
<div class="t" style="left:315px;top:1022px;font-size:12.6px;line-height:12.6px;font-weight:bold;color:#9a9a9a;font-family:'Liberation Sans',sans-serif;transform:scaleX(1.1125);transform-origin:0 0;">Bottom</div>
<div class="t" style="left:417px;top:1022px;font-size:12.6px;line-height:12.6px;font-weight:bold;color:#9a9a9a;font-family:'Liberation Sans',sans-serif;transform:scaleX(1.1290);transform-origin:0 0;">Middle</div>
<div class="t" style="left:513px;top:1022px;font-size:12.6px;line-height:12.6px;font-weight:bold;color:#9a9a9a;font-family:'Liberation Sans',sans-serif;transform:scaleX(1.1299);transform-origin:0 0;">Top</div>
<div style="left:965px;top:830px;width:2px;height:248px;background:#c0d4ea;"></div>
<div style="left:967px;top:828px;width:1px;height:250px;background:#5a78a8;"></div>
<div style="left:968px;top:752px;width:2px;height:326px;background:#aca494;"></div>
<div style="left:968px;top:727px;width:473px;height:351px;box-shadow:0 0 4px 1px rgba(0,0,0,0.22);border-radius:7px 7px 0 0;"></div>
<div style="left:1439px;top:727px;width:3px;height:351px;background:#e4e4e4;"></div>
<div style="left:1439px;top:1062px;width:3px;height:16px;background:#111;"></div>
<div style="left:970px;top:728px;width:469px;height:350px;background:#eeeeee;border-radius:6px 6px 0 0;"></div>
<div style="left:970px;top:728px;width:469px;height:27px;background:linear-gradient(#f4f0e4,#ebe4d0 50%,#e2d9bf);border-radius:6px 6px 0 0;"></div>
<div style="left:980px;top:733px;width:39px;height:18px;background:linear-gradient(#cbc4b2,#d8d0bd);border-radius:9px;"></div>
<div style="left:981px;top:734px;width:16px;height:16px;background:radial-gradient(circle at 50% 40%,#e2e0dc,#cfcdc8);border-radius:50%;border:1px solid #b9b5ac;"></div>
<div style="left:1001px;top:734px;width:16px;height:16px;background:radial-gradient(circle at 50% 40%,#e2e0dc,#cfcdc8);border-radius:50%;border:1px solid #b9b5ac;"></div>
<svg style="left:981px;top:734px" width="40" height="16"><path d="M5 5L11 11M11 5L5 11" stroke="#9a9a9a" stroke-width="1.1"/><path d="M25 9.5L28 6.5L31 9.5" fill="none" stroke="#9a9a9a" stroke-width="1.1"/></svg>
<div class="t" style="left:1031px;top:735px;font-size:14.5px;line-height:14.5px;font-weight:bold;color:#676767;font-family:'Liberation Sans',sans-serif;transform:scaleX(1.1155);transform-origin:0 0;">Properties</div>
<div style="left:975px;top:780px;width:458px;height:298px;background:#eeeeee;border:1px solid #6f8cb0;border-bottom:none;"></div>
<div style="left:976px;top:781px;width:456px;height:2px;background:#c8dcf0;"></div>
<svg style="left:977px;top:762px" width="57" height="19"><path d="M0.5 19 V6 L6 0.5 H55.5 V19" fill="#eeeeee" stroke="#6f8cb0" stroke-width="1"/></svg>
<svg style="left:1033px;top:762px" width="110" height="19"><path d="M0.5 19 V6 L6 0.5 H108.5 V19" fill="#eeeeee" stroke="#6f8cb0" stroke-width="1"/></svg>
<svg style="left:1142px;top:762px" width="80" height="19"><path d="M0.5 19 V6 L6 0.5 H78.5 V19" fill="#eeeeee" stroke="#6f8cb0" stroke-width="1"/></svg>
<svg style="left:1221px;top:762px" width="126" height="19"><path d="M0.5 19 V6 L6 0.5 H124.5 V19" fill="#eeeeee" stroke="#6f8cb0" stroke-width="1"/></svg>
<svg style="left:1346px;top:762px" width="82" height="21"><path d="M0.5 21 V6 L6 0.5 H80.5 V21" fill="#c8dcf0" stroke="#6f8cb0" stroke-width="1"/></svg>
<div class="t" style="left:988px;top:766px;font-size:12.6px;line-height:12.6px;font-weight:bold;color:#2a2a2a;font-family:'Liberation Sans',sans-serif;transform:scaleX(1.1510);transform-origin:0 0;">Main</div>
<div class="t" style="left:1043px;top:766px;font-size:12.6px;line-height:12.6px;font-weight:bold;color:#2a2a2a;font-family:'Liberation Sans',sans-serif;transform:scaleX(1.1568);transform-origin:0 0;">Aspect Ratio</div>
<div class="t" style="left:1152px;top:766px;font-size:12.6px;line-height:12.6px;font-weight:bold;color:#2a2a2a;font-family:'Liberation Sans',sans-serif;transform:scaleX(1.1486);transform-origin:0 0;">Lighting</div>
<div class="t" style="left:1232px;top:766px;font-size:12.6px;line-height:12.6px;font-weight:bold;color:#2a2a2a;font-family:'Liberation Sans',sans-serif;transform:scaleX(1.1754);transform-origin:0 0;">Vertical Range</div>
<div class="t" style="left:1356px;top:766px;font-size:12.6px;line-height:12.6px;font-weight:bold;color:#2a2a2a;font-family:'Liberation Sans',sans-serif;transform:scaleX(1.1780);transform-origin:0 0;">Transect</div>
<div class="t" style="left:982px;top:793px;font-size:12.6px;line-height:12.6px;font-weight:bold;color:#2a2a2a;font-family:'Liberation Sans',sans-serif;transform:scaleX(1.1534);transform-origin:0 0;">Max distance:</div>
<div class="t" style="left:1047px;top:814px;font-size:12.6px;line-height:12.6px;font-weight:bold;color:#2a2a2a;font-family:'Liberation Sans',sans-serif;transform:scaleX(1.0818);transform-origin:0 0;">Unit:</div>
<div style="left:1084px;top:789px;width:136px;height:19px;background:#fff;border:1px solid #7a8a9a;border-top-color:#333;border-left-color:#333;"></div>
<div class="t" style="left:1089px;top:793px;font-size:13px;line-height:13px;font-weight:normal;color:#333;font-family:'Liberation Sans',sans-serif;transform:scaleX(1.0598);transform-origin:0 0;-webkit-text-stroke:0.25px #333;">150</div>
<div style="left:1084px;top:808px;width:137px;height:23px;background:#fff;border:1px solid #7f9fc8;"></div>
<div style="left:1085px;top:809px;width:1px;height:21px;background:#333;"></div>
<div style="left:1201px;top:809px;width:19px;height:21px;background:linear-gradient(#f0f5fb,#cfdcea);border-left:1px solid #9ab;"></div>
<svg style="left:1205px;top:816px" width="11" height="7"><path d="M0 0h11L5.5 6z" fill="#222"/></svg>
<div class="t" style="left:1087px;top:814px;font-size:12.6px;line-height:12.6px;font-weight:bold;color:#111;font-family:'Liberation Sans',sans-serif;transform:scaleX(1.0438);transform-origin:0 0;">km</div>
</body></html>
